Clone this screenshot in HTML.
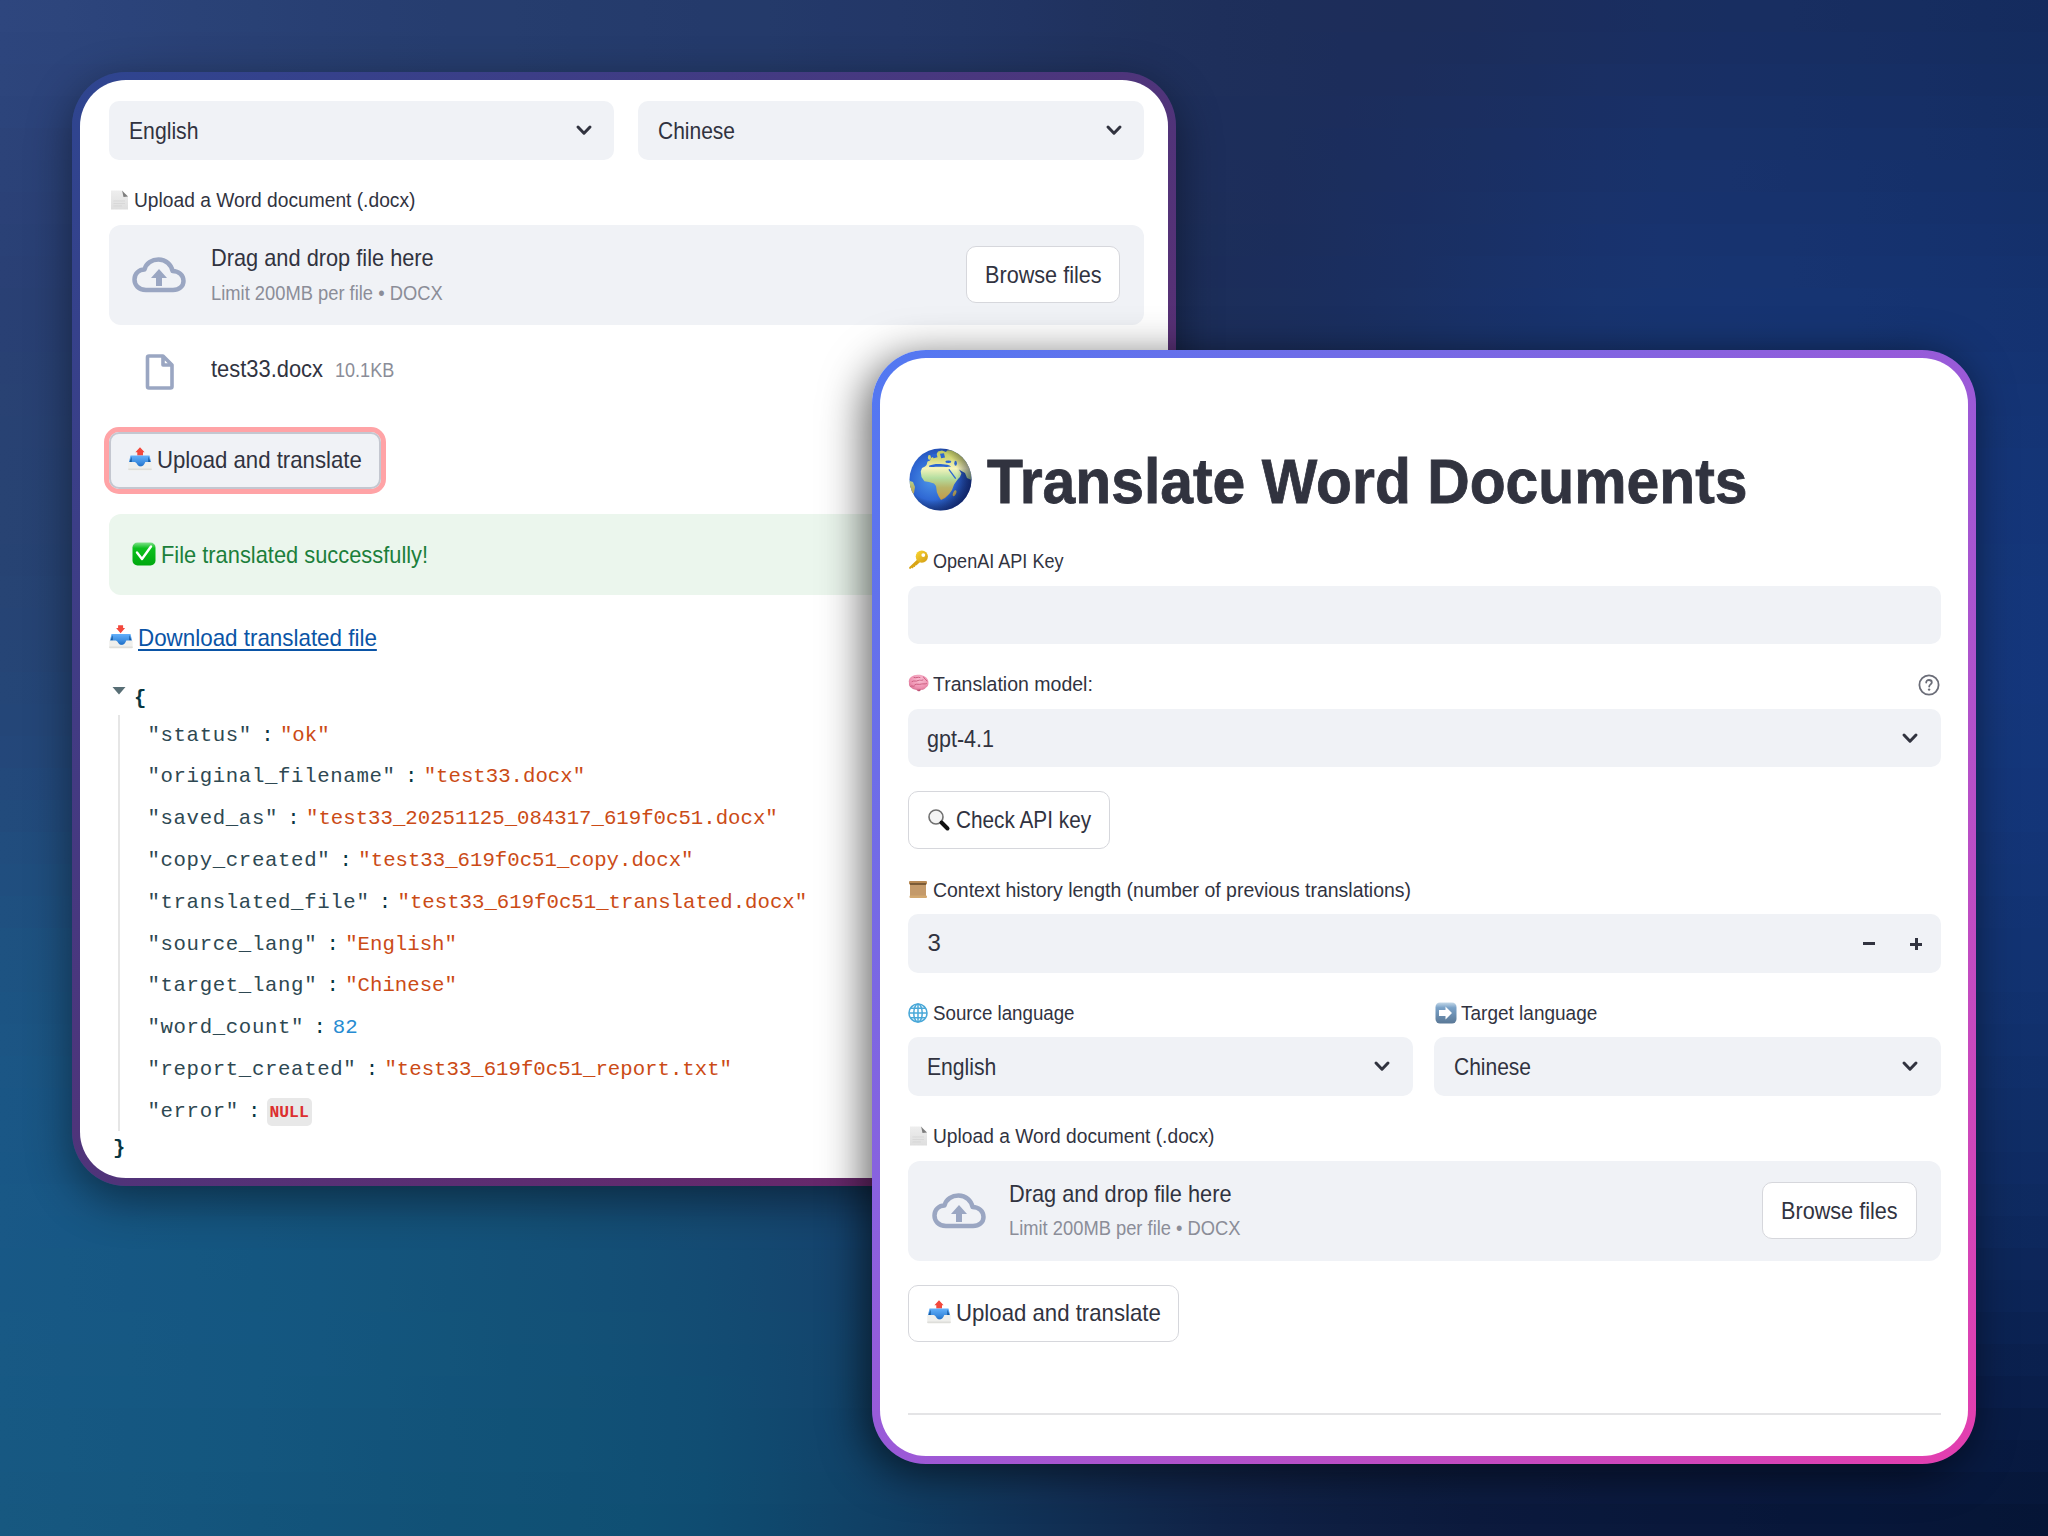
<!DOCTYPE html><html><head><meta charset="utf-8"><style>
html,body{margin:0;padding:0;}
body{width:2048px;height:1536px;overflow:hidden;position:relative;font-family:"Liberation Sans",sans-serif;background:#1a3060;}
.b{position:absolute;}
.t{position:absolute;white-space:nowrap;transform-origin:0 0;display:block;}
</style></head><body>

<div style="position:absolute;left:0;top:0px;width:2048px;height:33px;background:linear-gradient(90deg,rgb(46,70,126) 0.0%,rgb(45,69,124) 3.1%,rgb(43,67,122) 6.2%,rgb(42,66,119) 9.4%,rgb(41,65,117) 12.5%,rgb(40,63,115) 15.6%,rgb(39,62,113) 18.8%,rgb(38,61,111) 21.9%,rgb(38,61,110) 25.0%,rgb(37,60,109) 28.1%,rgb(37,59,108) 31.2%,rgb(36,58,107) 34.4%,rgb(36,58,106) 37.5%,rgb(35,56,105) 40.6%,rgb(35,55,103) 43.8%,rgb(34,54,101) 46.9%,rgb(33,52,99) 50.0%,rgb(32,50,95) 53.1%,rgb(31,49,92) 56.2%,rgb(30,47,91) 59.4%,rgb(29,46,90) 62.5%,rgb(29,45,90) 65.6%,rgb(28,45,90) 68.8%,rgb(28,45,91) 71.9%,rgb(27,45,93) 75.0%,rgb(26,45,95) 78.1%,rgb(25,46,96) 81.2%,rgb(24,46,97) 84.4%,rgb(24,46,97) 87.5%,rgb(23,45,96) 90.6%,rgb(22,45,96) 93.8%,rgb(21,44,95) 96.9%,rgb(20,43,94) 100.0%)"></div>
<div style="position:absolute;left:0;top:32px;width:2048px;height:33px;background:linear-gradient(90deg,rgb(45,69,125) 0.0%,rgb(44,68,123) 3.1%,rgb(43,67,121) 6.2%,rgb(42,65,118) 9.4%,rgb(41,64,116) 12.5%,rgb(40,63,114) 15.6%,rgb(39,62,112) 18.8%,rgb(38,61,111) 21.9%,rgb(38,61,110) 25.0%,rgb(37,60,109) 28.1%,rgb(37,59,108) 31.2%,rgb(36,58,107) 34.4%,rgb(36,58,106) 37.5%,rgb(35,56,104) 40.6%,rgb(35,55,103) 43.8%,rgb(34,54,101) 46.9%,rgb(33,52,98) 50.0%,rgb(32,50,94) 53.1%,rgb(31,48,92) 56.2%,rgb(30,47,91) 59.4%,rgb(29,46,90) 62.5%,rgb(28,45,91) 65.6%,rgb(28,45,91) 68.8%,rgb(27,45,92) 71.9%,rgb(27,46,94) 75.0%,rgb(26,46,96) 78.1%,rgb(25,46,98) 81.2%,rgb(24,46,99) 84.4%,rgb(23,46,99) 87.5%,rgb(23,46,98) 90.6%,rgb(22,45,98) 93.8%,rgb(21,45,96) 96.9%,rgb(20,44,96) 100.0%)"></div>
<div style="position:absolute;left:0;top:64px;width:2048px;height:33px;background:linear-gradient(90deg,rgb(45,69,124) 0.0%,rgb(44,67,122) 3.1%,rgb(43,66,120) 6.2%,rgb(42,65,117) 9.4%,rgb(41,64,115) 12.5%,rgb(40,63,114) 15.6%,rgb(39,62,112) 18.8%,rgb(38,61,111) 21.9%,rgb(38,61,109) 25.0%,rgb(37,60,108) 28.1%,rgb(37,59,108) 31.2%,rgb(36,59,107) 34.4%,rgb(36,58,105) 37.5%,rgb(35,56,104) 40.6%,rgb(34,55,102) 43.8%,rgb(34,54,100) 46.9%,rgb(33,52,97) 50.0%,rgb(32,50,94) 53.1%,rgb(31,48,92) 56.2%,rgb(30,47,91) 59.4%,rgb(29,46,91) 62.5%,rgb(28,45,91) 65.6%,rgb(28,45,92) 68.8%,rgb(27,46,94) 71.9%,rgb(26,46,96) 75.0%,rgb(26,47,99) 78.1%,rgb(25,47,100) 81.2%,rgb(24,47,101) 84.4%,rgb(23,47,101) 87.5%,rgb(22,47,100) 90.6%,rgb(22,46,100) 93.8%,rgb(21,45,98) 96.9%,rgb(20,45,97) 100.0%)"></div>
<div style="position:absolute;left:0;top:96px;width:2048px;height:33px;background:linear-gradient(90deg,rgb(44,68,123) 0.0%,rgb(43,66,121) 3.1%,rgb(42,65,118) 6.2%,rgb(41,64,117) 9.4%,rgb(41,63,115) 12.5%,rgb(40,63,113) 15.6%,rgb(39,62,112) 18.8%,rgb(38,61,110) 21.9%,rgb(38,61,109) 25.0%,rgb(37,60,108) 28.1%,rgb(37,59,107) 31.2%,rgb(36,59,106) 34.4%,rgb(36,58,105) 37.5%,rgb(35,56,104) 40.6%,rgb(34,55,102) 43.8%,rgb(33,53,100) 46.9%,rgb(32,51,97) 50.0%,rgb(31,49,94) 53.1%,rgb(30,48,92) 56.2%,rgb(29,46,91) 59.4%,rgb(28,46,91) 62.5%,rgb(28,45,92) 65.6%,rgb(27,46,94) 68.8%,rgb(27,46,96) 71.9%,rgb(26,47,98) 75.0%,rgb(25,47,101) 78.1%,rgb(25,48,103) 81.2%,rgb(24,48,103) 84.4%,rgb(23,48,103) 87.5%,rgb(22,47,103) 90.6%,rgb(22,47,102) 93.8%,rgb(21,46,100) 96.9%,rgb(20,45,99) 100.0%)"></div>
<div style="position:absolute;left:0;top:128px;width:2048px;height:33px;background:linear-gradient(90deg,rgb(44,67,121) 0.0%,rgb(43,65,119) 3.1%,rgb(42,64,117) 6.2%,rgb(41,64,116) 9.4%,rgb(40,63,114) 12.5%,rgb(40,62,113) 15.6%,rgb(39,62,111) 18.8%,rgb(38,61,110) 21.9%,rgb(38,61,109) 25.0%,rgb(37,60,108) 28.1%,rgb(37,60,108) 31.2%,rgb(36,59,106) 34.4%,rgb(36,58,105) 37.5%,rgb(35,56,103) 40.6%,rgb(34,55,101) 43.8%,rgb(33,53,99) 46.9%,rgb(32,51,96) 50.0%,rgb(31,49,93) 53.1%,rgb(30,47,91) 56.2%,rgb(29,46,91) 59.4%,rgb(28,46,91) 62.5%,rgb(27,45,93) 65.6%,rgb(27,46,95) 68.8%,rgb(26,47,97) 71.9%,rgb(26,47,100) 75.0%,rgb(25,48,103) 78.1%,rgb(24,49,105) 81.2%,rgb(24,49,105) 84.4%,rgb(23,49,105) 87.5%,rgb(22,48,105) 90.6%,rgb(22,48,104) 93.8%,rgb(21,47,103) 96.9%,rgb(20,46,101) 100.0%)"></div>
<div style="position:absolute;left:0;top:160px;width:2048px;height:33px;background:linear-gradient(90deg,rgb(43,66,120) 0.0%,rgb(42,65,118) 3.1%,rgb(41,64,116) 6.2%,rgb(41,63,115) 9.4%,rgb(40,63,113) 12.5%,rgb(39,62,112) 15.6%,rgb(39,62,111) 18.8%,rgb(38,62,110) 21.9%,rgb(38,61,109) 25.0%,rgb(37,61,109) 28.1%,rgb(37,60,108) 31.2%,rgb(36,59,106) 34.4%,rgb(36,58,105) 37.5%,rgb(35,56,103) 40.6%,rgb(34,55,101) 43.8%,rgb(33,53,99) 46.9%,rgb(32,51,96) 50.0%,rgb(31,49,93) 53.1%,rgb(30,47,91) 56.2%,rgb(29,46,91) 59.4%,rgb(28,45,91) 62.5%,rgb(27,46,93) 65.6%,rgb(27,46,96) 68.8%,rgb(26,47,99) 71.9%,rgb(25,48,102) 75.0%,rgb(25,49,105) 78.1%,rgb(24,50,107) 81.2%,rgb(24,50,108) 84.4%,rgb(23,49,107) 87.5%,rgb(22,49,107) 90.6%,rgb(21,48,106) 93.8%,rgb(21,48,105) 96.9%,rgb(20,47,103) 100.0%)"></div>
<div style="position:absolute;left:0;top:192px;width:2048px;height:33px;background:linear-gradient(90deg,rgb(43,65,119) 0.0%,rgb(42,64,117) 3.1%,rgb(41,63,115) 6.2%,rgb(40,63,114) 9.4%,rgb(40,62,113) 12.5%,rgb(39,62,112) 15.6%,rgb(39,62,111) 18.8%,rgb(38,62,110) 21.9%,rgb(38,61,110) 25.0%,rgb(37,61,109) 28.1%,rgb(37,60,108) 31.2%,rgb(36,59,106) 34.4%,rgb(36,58,105) 37.5%,rgb(35,56,103) 40.6%,rgb(34,55,101) 43.8%,rgb(33,53,98) 46.9%,rgb(32,51,95) 50.0%,rgb(31,49,93) 53.1%,rgb(30,47,91) 56.2%,rgb(29,46,90) 59.4%,rgb(28,45,91) 62.5%,rgb(27,46,94) 65.6%,rgb(26,46,97) 68.8%,rgb(26,48,100) 71.9%,rgb(25,49,104) 75.0%,rgb(25,50,107) 78.1%,rgb(24,50,109) 81.2%,rgb(23,50,109) 84.4%,rgb(23,50,109) 87.5%,rgb(22,50,109) 90.6%,rgb(21,49,108) 93.8%,rgb(21,48,107) 96.9%,rgb(20,48,105) 100.0%)"></div>
<div style="position:absolute;left:0;top:224px;width:2048px;height:33px;background:linear-gradient(90deg,rgb(42,65,118) 0.0%,rgb(41,63,116) 3.1%,rgb(41,63,114) 6.2%,rgb(40,62,113) 9.4%,rgb(40,62,112) 12.5%,rgb(39,62,112) 15.6%,rgb(39,62,111) 18.8%,rgb(38,62,110) 21.9%,rgb(38,62,110) 25.0%,rgb(37,61,109) 28.1%,rgb(37,60,108) 31.2%,rgb(36,59,107) 34.4%,rgb(36,58,105) 37.5%,rgb(35,56,103) 40.6%,rgb(34,55,101) 43.8%,rgb(33,53,98) 46.9%,rgb(32,50,95) 50.0%,rgb(31,48,93) 53.1%,rgb(29,47,91) 56.2%,rgb(28,46,90) 59.4%,rgb(27,45,91) 62.5%,rgb(27,46,94) 65.6%,rgb(26,47,98) 68.8%,rgb(25,48,101) 71.9%,rgb(25,49,105) 75.0%,rgb(24,50,109) 78.1%,rgb(24,51,111) 81.2%,rgb(23,51,111) 84.4%,rgb(23,51,111) 87.5%,rgb(22,50,111) 90.6%,rgb(21,50,110) 93.8%,rgb(21,49,109) 96.9%,rgb(20,48,107) 100.0%)"></div>
<div style="position:absolute;left:0;top:256px;width:2048px;height:33px;background:linear-gradient(90deg,rgb(42,64,117) 0.0%,rgb(41,63,115) 3.1%,rgb(40,62,114) 6.2%,rgb(40,62,113) 9.4%,rgb(39,62,112) 12.5%,rgb(39,62,111) 15.6%,rgb(39,62,111) 18.8%,rgb(38,62,110) 21.9%,rgb(38,62,110) 25.0%,rgb(37,62,109) 28.1%,rgb(37,61,108) 31.2%,rgb(36,60,107) 34.4%,rgb(36,58,105) 37.5%,rgb(35,56,103) 40.6%,rgb(34,55,100) 43.8%,rgb(33,53,98) 46.9%,rgb(32,50,95) 50.0%,rgb(30,48,93) 53.1%,rgb(29,47,91) 56.2%,rgb(28,45,90) 59.4%,rgb(27,45,92) 62.5%,rgb(26,46,95) 65.6%,rgb(26,47,98) 68.8%,rgb(25,49,103) 71.9%,rgb(25,50,107) 75.0%,rgb(24,51,110) 78.1%,rgb(24,52,112) 81.2%,rgb(23,52,113) 84.4%,rgb(23,52,113) 87.5%,rgb(22,51,112) 90.6%,rgb(21,51,112) 93.8%,rgb(21,50,111) 96.9%,rgb(20,49,109) 100.0%)"></div>
<div style="position:absolute;left:0;top:288px;width:2048px;height:33px;background:linear-gradient(90deg,rgb(41,64,116) 0.0%,rgb(41,63,114) 3.1%,rgb(40,62,113) 6.2%,rgb(40,62,112) 9.4%,rgb(39,62,112) 12.5%,rgb(39,62,111) 15.6%,rgb(38,63,111) 18.8%,rgb(38,63,110) 21.9%,rgb(38,62,110) 25.0%,rgb(38,62,109) 28.1%,rgb(37,61,108) 31.2%,rgb(36,60,107) 34.4%,rgb(36,58,105) 37.5%,rgb(35,57,103) 40.6%,rgb(34,55,100) 43.8%,rgb(33,53,98) 46.9%,rgb(31,50,95) 50.0%,rgb(30,48,93) 53.1%,rgb(29,47,91) 56.2%,rgb(28,46,90) 59.4%,rgb(27,46,92) 62.5%,rgb(26,46,95) 65.6%,rgb(26,48,99) 68.8%,rgb(25,49,104) 71.9%,rgb(24,50,108) 75.0%,rgb(24,52,111) 78.1%,rgb(23,52,113) 81.2%,rgb(23,52,114) 84.4%,rgb(22,52,114) 87.5%,rgb(22,52,114) 90.6%,rgb(21,51,113) 93.8%,rgb(21,51,112) 96.9%,rgb(20,50,111) 100.0%)"></div>
<div style="position:absolute;left:0;top:320px;width:2048px;height:33px;background:linear-gradient(90deg,rgb(41,64,116) 0.0%,rgb(40,63,114) 3.1%,rgb(40,63,113) 6.2%,rgb(39,62,112) 9.4%,rgb(39,63,111) 12.5%,rgb(39,63,111) 15.6%,rgb(38,63,111) 18.8%,rgb(38,63,111) 21.9%,rgb(38,63,110) 25.0%,rgb(38,62,110) 28.1%,rgb(37,62,109) 31.2%,rgb(36,60,107) 34.4%,rgb(36,59,105) 37.5%,rgb(35,57,103) 40.6%,rgb(34,55,101) 43.8%,rgb(32,53,98) 46.9%,rgb(31,51,95) 50.0%,rgb(30,49,93) 53.1%,rgb(29,47,91) 56.2%,rgb(28,46,91) 59.4%,rgb(27,46,93) 62.5%,rgb(26,47,96) 65.6%,rgb(25,48,100) 68.8%,rgb(25,50,105) 71.9%,rgb(24,51,109) 75.0%,rgb(24,52,112) 78.1%,rgb(23,53,114) 81.2%,rgb(23,53,115) 84.4%,rgb(22,53,116) 87.5%,rgb(22,53,116) 90.6%,rgb(21,52,115) 93.8%,rgb(21,51,114) 96.9%,rgb(20,50,113) 100.0%)"></div>
<div style="position:absolute;left:0;top:352px;width:2048px;height:33px;background:linear-gradient(90deg,rgb(41,65,115) 0.0%,rgb(40,64,114) 3.1%,rgb(40,63,112) 6.2%,rgb(39,63,112) 9.4%,rgb(39,63,111) 12.5%,rgb(38,63,111) 15.6%,rgb(38,63,111) 18.8%,rgb(38,63,111) 21.9%,rgb(38,63,111) 25.0%,rgb(37,63,110) 28.1%,rgb(37,62,109) 31.2%,rgb(36,61,107) 34.4%,rgb(35,59,106) 37.5%,rgb(34,57,103) 40.6%,rgb(33,55,101) 43.8%,rgb(32,53,98) 46.9%,rgb(31,51,96) 50.0%,rgb(30,49,94) 53.1%,rgb(29,47,92) 56.2%,rgb(28,46,92) 59.4%,rgb(27,46,94) 62.5%,rgb(26,47,97) 65.6%,rgb(25,49,101) 68.8%,rgb(25,50,106) 71.9%,rgb(24,52,110) 75.0%,rgb(24,53,113) 78.1%,rgb(23,53,115) 81.2%,rgb(23,54,117) 84.4%,rgb(22,54,117) 87.5%,rgb(22,53,117) 90.6%,rgb(21,53,117) 93.8%,rgb(21,52,116) 96.9%,rgb(20,51,114) 100.0%)"></div>
<div style="position:absolute;left:0;top:384px;width:2048px;height:33px;background:linear-gradient(90deg,rgb(41,66,115) 0.0%,rgb(40,64,114) 3.1%,rgb(39,63,112) 6.2%,rgb(39,63,112) 9.4%,rgb(38,63,111) 12.5%,rgb(38,63,111) 15.6%,rgb(38,63,111) 18.8%,rgb(38,64,111) 21.9%,rgb(38,64,111) 25.0%,rgb(37,63,110) 28.1%,rgb(37,62,109) 31.2%,rgb(36,61,108) 34.4%,rgb(35,59,106) 37.5%,rgb(34,57,104) 40.6%,rgb(33,55,101) 43.8%,rgb(32,53,99) 46.9%,rgb(31,51,97) 50.0%,rgb(30,49,94) 53.1%,rgb(29,48,93) 56.2%,rgb(28,47,93) 59.4%,rgb(27,47,95) 62.5%,rgb(26,48,98) 65.6%,rgb(25,50,102) 68.8%,rgb(24,51,106) 71.9%,rgb(24,52,110) 75.0%,rgb(23,53,114) 78.1%,rgb(23,54,116) 81.2%,rgb(23,54,118) 84.4%,rgb(22,54,118) 87.5%,rgb(22,54,118) 90.6%,rgb(21,53,118) 93.8%,rgb(21,52,117) 96.9%,rgb(20,52,116) 100.0%)"></div>
<div style="position:absolute;left:0;top:416px;width:2048px;height:33px;background:linear-gradient(90deg,rgb(40,66,115) 0.0%,rgb(40,65,114) 3.1%,rgb(39,64,112) 6.2%,rgb(39,64,112) 9.4%,rgb(38,64,111) 12.5%,rgb(38,64,111) 15.6%,rgb(38,64,111) 18.8%,rgb(37,64,111) 21.9%,rgb(37,64,111) 25.0%,rgb(37,64,111) 28.1%,rgb(37,63,110) 31.2%,rgb(36,61,108) 34.4%,rgb(35,60,106) 37.5%,rgb(34,58,104) 40.6%,rgb(33,56,102) 43.8%,rgb(32,54,100) 46.9%,rgb(31,52,97) 50.0%,rgb(30,50,95) 53.1%,rgb(29,49,94) 56.2%,rgb(28,48,95) 59.4%,rgb(27,48,96) 62.5%,rgb(26,49,100) 65.6%,rgb(25,50,103) 68.8%,rgb(24,52,107) 71.9%,rgb(24,53,111) 75.0%,rgb(23,54,115) 78.1%,rgb(23,54,117) 81.2%,rgb(23,55,119) 84.4%,rgb(22,55,119) 87.5%,rgb(22,54,120) 90.6%,rgb(21,54,119) 93.8%,rgb(21,53,118) 96.9%,rgb(20,52,117) 100.0%)"></div>
<div style="position:absolute;left:0;top:448px;width:2048px;height:33px;background:linear-gradient(90deg,rgb(40,66,115) 0.0%,rgb(39,65,114) 3.1%,rgb(39,64,112) 6.2%,rgb(38,64,112) 9.4%,rgb(38,64,112) 12.5%,rgb(38,64,111) 15.6%,rgb(37,64,111) 18.8%,rgb(37,64,111) 21.9%,rgb(37,64,111) 25.0%,rgb(37,64,111) 28.1%,rgb(36,63,110) 31.2%,rgb(36,62,108) 34.4%,rgb(35,60,107) 37.5%,rgb(34,58,105) 40.6%,rgb(33,56,102) 43.8%,rgb(32,54,100) 46.9%,rgb(31,52,98) 50.0%,rgb(30,51,97) 53.1%,rgb(29,49,96) 56.2%,rgb(27,49,96) 59.4%,rgb(26,49,98) 62.5%,rgb(26,50,101) 65.6%,rgb(25,51,105) 68.8%,rgb(24,52,108) 71.9%,rgb(24,54,112) 75.0%,rgb(23,54,115) 78.1%,rgb(23,55,118) 81.2%,rgb(22,55,119) 84.4%,rgb(22,55,120) 87.5%,rgb(22,55,121) 90.6%,rgb(21,54,120) 93.8%,rgb(21,53,120) 96.9%,rgb(20,53,118) 100.0%)"></div>
<div style="position:absolute;left:0;top:480px;width:2048px;height:33px;background:linear-gradient(90deg,rgb(40,67,115) 0.0%,rgb(39,66,114) 3.1%,rgb(39,65,113) 6.2%,rgb(38,65,112) 9.4%,rgb(38,64,112) 12.5%,rgb(37,65,112) 15.6%,rgb(37,65,112) 18.8%,rgb(37,65,112) 21.9%,rgb(37,65,111) 25.0%,rgb(36,64,111) 28.1%,rgb(36,63,110) 31.2%,rgb(35,62,109) 34.4%,rgb(35,60,107) 37.5%,rgb(34,58,105) 40.6%,rgb(33,56,103) 43.8%,rgb(32,54,101) 46.9%,rgb(31,53,99) 50.0%,rgb(30,51,98) 53.1%,rgb(29,50,97) 56.2%,rgb(27,50,98) 59.4%,rgb(26,50,99) 62.5%,rgb(25,51,102) 65.6%,rgb(25,52,106) 68.8%,rgb(24,53,109) 71.9%,rgb(23,54,113) 75.0%,rgb(23,55,116) 78.1%,rgb(23,56,118) 81.2%,rgb(22,56,120) 84.4%,rgb(22,56,121) 87.5%,rgb(22,55,122) 90.6%,rgb(21,55,121) 93.8%,rgb(21,54,121) 96.9%,rgb(20,53,120) 100.0%)"></div>
<div style="position:absolute;left:0;top:512px;width:2048px;height:33px;background:linear-gradient(90deg,rgb(40,67,115) 0.0%,rgb(39,66,114) 3.1%,rgb(38,65,113) 6.2%,rgb(38,65,112) 9.4%,rgb(37,65,112) 12.5%,rgb(37,65,112) 15.6%,rgb(37,65,112) 18.8%,rgb(36,65,112) 21.9%,rgb(36,65,112) 25.0%,rgb(36,64,111) 28.1%,rgb(36,64,110) 31.2%,rgb(35,62,109) 34.4%,rgb(34,61,107) 37.5%,rgb(34,59,106) 40.6%,rgb(33,57,104) 43.8%,rgb(32,55,102) 46.9%,rgb(31,53,100) 50.0%,rgb(30,52,99) 53.1%,rgb(28,51,99) 56.2%,rgb(27,51,99) 59.4%,rgb(26,51,101) 62.5%,rgb(25,52,104) 65.6%,rgb(25,53,107) 68.8%,rgb(24,54,110) 71.9%,rgb(23,55,114) 75.0%,rgb(23,56,117) 78.1%,rgb(22,56,119) 81.2%,rgb(22,56,121) 84.4%,rgb(22,56,122) 87.5%,rgb(22,56,122) 90.6%,rgb(21,55,122) 93.8%,rgb(21,54,122) 96.9%,rgb(20,53,120) 100.0%)"></div>
<div style="position:absolute;left:0;top:544px;width:2048px;height:33px;background:linear-gradient(90deg,rgb(39,67,115) 0.0%,rgb(38,66,114) 3.1%,rgb(38,66,113) 6.2%,rgb(37,66,113) 9.4%,rgb(37,66,113) 12.5%,rgb(36,66,112) 15.6%,rgb(36,66,112) 18.8%,rgb(36,66,112) 21.9%,rgb(36,65,112) 25.0%,rgb(35,65,111) 28.1%,rgb(35,64,110) 31.2%,rgb(35,63,109) 34.4%,rgb(34,61,108) 37.5%,rgb(33,59,106) 40.6%,rgb(32,57,104) 43.8%,rgb(32,55,103) 46.9%,rgb(31,54,101) 50.0%,rgb(29,53,100) 53.1%,rgb(28,52,100) 56.2%,rgb(27,51,101) 59.4%,rgb(26,52,102) 62.5%,rgb(25,52,105) 65.6%,rgb(24,53,108) 68.8%,rgb(24,55,111) 71.9%,rgb(23,55,115) 75.0%,rgb(23,56,117) 78.1%,rgb(22,56,120) 81.2%,rgb(22,57,121) 84.4%,rgb(22,56,122) 87.5%,rgb(22,56,123) 90.6%,rgb(21,55,123) 93.8%,rgb(21,55,122) 96.9%,rgb(20,54,121) 100.0%)"></div>
<div style="position:absolute;left:0;top:576px;width:2048px;height:33px;background:linear-gradient(90deg,rgb(39,68,116) 0.0%,rgb(38,67,115) 3.1%,rgb(37,66,114) 6.2%,rgb(37,66,113) 9.4%,rgb(36,66,113) 12.5%,rgb(36,66,113) 15.6%,rgb(36,66,113) 18.8%,rgb(35,66,113) 21.9%,rgb(35,66,112) 25.0%,rgb(35,65,112) 28.1%,rgb(35,64,111) 31.2%,rgb(34,63,110) 34.4%,rgb(34,61,108) 37.5%,rgb(33,60,107) 40.6%,rgb(32,58,105) 43.8%,rgb(31,56,104) 46.9%,rgb(30,54,102) 50.0%,rgb(29,53,102) 53.1%,rgb(28,52,101) 56.2%,rgb(27,52,102) 59.4%,rgb(26,52,104) 62.5%,rgb(25,53,106) 65.6%,rgb(24,54,109) 68.8%,rgb(24,55,112) 71.9%,rgb(23,56,115) 75.0%,rgb(23,57,118) 78.1%,rgb(22,57,120) 81.2%,rgb(22,57,122) 84.4%,rgb(22,57,123) 87.5%,rgb(22,56,123) 90.6%,rgb(21,56,124) 93.8%,rgb(21,55,123) 96.9%,rgb(20,54,122) 100.0%)"></div>
<div style="position:absolute;left:0;top:608px;width:2048px;height:33px;background:linear-gradient(90deg,rgb(38,68,117) 0.0%,rgb(38,67,115) 3.1%,rgb(37,67,115) 6.2%,rgb(36,67,114) 9.4%,rgb(36,67,114) 12.5%,rgb(35,67,114) 15.6%,rgb(35,67,113) 18.8%,rgb(35,67,113) 21.9%,rgb(35,66,113) 25.0%,rgb(34,66,112) 28.1%,rgb(34,65,111) 31.2%,rgb(34,63,110) 34.4%,rgb(33,62,109) 37.5%,rgb(33,60,107) 40.6%,rgb(32,58,106) 43.8%,rgb(31,56,105) 46.9%,rgb(30,55,103) 50.0%,rgb(29,54,103) 53.1%,rgb(28,53,103) 56.2%,rgb(27,53,103) 59.4%,rgb(26,53,105) 62.5%,rgb(25,54,107) 65.6%,rgb(24,55,110) 68.8%,rgb(23,56,113) 71.9%,rgb(23,57,116) 75.0%,rgb(22,57,118) 78.1%,rgb(22,57,120) 81.2%,rgb(22,57,122) 84.4%,rgb(22,57,123) 87.5%,rgb(21,56,124) 90.6%,rgb(21,56,124) 93.8%,rgb(21,55,123) 96.9%,rgb(20,54,122) 100.0%)"></div>
<div style="position:absolute;left:0;top:640px;width:2048px;height:33px;background:linear-gradient(90deg,rgb(38,69,118) 0.0%,rgb(37,68,116) 3.1%,rgb(36,68,116) 6.2%,rgb(36,68,115) 9.4%,rgb(35,68,114) 12.5%,rgb(35,68,114) 15.6%,rgb(34,68,114) 18.8%,rgb(34,67,113) 21.9%,rgb(34,67,113) 25.0%,rgb(34,66,112) 28.1%,rgb(33,65,111) 31.2%,rgb(33,64,110) 34.4%,rgb(33,62,109) 37.5%,rgb(32,60,108) 40.6%,rgb(32,59,107) 43.8%,rgb(31,57,105) 46.9%,rgb(30,56,104) 50.0%,rgb(29,54,104) 53.1%,rgb(28,54,104) 56.2%,rgb(27,53,104) 59.4%,rgb(26,54,106) 62.5%,rgb(25,54,108) 65.6%,rgb(24,55,111) 68.8%,rgb(23,56,113) 71.9%,rgb(23,57,116) 75.0%,rgb(22,57,118) 78.1%,rgb(22,57,120) 81.2%,rgb(22,57,122) 84.4%,rgb(22,57,123) 87.5%,rgb(21,56,124) 90.6%,rgb(21,56,124) 93.8%,rgb(21,55,124) 96.9%,rgb(20,54,123) 100.0%)"></div>
<div style="position:absolute;left:0;top:672px;width:2048px;height:33px;background:linear-gradient(90deg,rgb(37,70,119) 0.0%,rgb(36,69,118) 3.1%,rgb(36,69,117) 6.2%,rgb(35,68,116) 9.4%,rgb(34,68,115) 12.5%,rgb(34,68,115) 15.6%,rgb(34,68,114) 18.8%,rgb(33,68,114) 21.9%,rgb(33,67,113) 25.0%,rgb(33,67,113) 28.1%,rgb(33,66,112) 31.2%,rgb(33,64,111) 34.4%,rgb(32,63,110) 37.5%,rgb(32,61,108) 40.6%,rgb(31,59,107) 43.8%,rgb(31,57,106) 46.9%,rgb(30,56,105) 50.0%,rgb(29,55,105) 53.1%,rgb(28,54,105) 56.2%,rgb(27,54,105) 59.4%,rgb(26,54,107) 62.5%,rgb(25,55,109) 65.6%,rgb(24,56,111) 68.8%,rgb(23,57,114) 71.9%,rgb(22,57,116) 75.0%,rgb(22,57,118) 78.1%,rgb(22,57,120) 81.2%,rgb(22,57,122) 84.4%,rgb(21,57,123) 87.5%,rgb(21,56,124) 90.6%,rgb(21,56,124) 93.8%,rgb(21,55,124) 96.9%,rgb(20,54,123) 100.0%)"></div>
<div style="position:absolute;left:0;top:704px;width:2048px;height:33px;background:linear-gradient(90deg,rgb(36,70,120) 0.0%,rgb(36,70,119) 3.1%,rgb(35,69,118) 6.2%,rgb(34,69,117) 9.4%,rgb(34,69,116) 12.5%,rgb(33,69,115) 15.6%,rgb(33,69,115) 18.8%,rgb(33,69,114) 21.9%,rgb(32,68,114) 25.0%,rgb(32,67,113) 28.1%,rgb(32,66,112) 31.2%,rgb(32,65,111) 34.4%,rgb(32,63,110) 37.5%,rgb(31,61,109) 40.6%,rgb(31,60,108) 43.8%,rgb(30,58,107) 46.9%,rgb(30,56,106) 50.0%,rgb(29,55,105) 53.1%,rgb(28,55,105) 56.2%,rgb(26,54,106) 59.4%,rgb(25,55,107) 62.5%,rgb(24,55,109) 65.6%,rgb(24,56,111) 68.8%,rgb(23,57,114) 71.9%,rgb(22,57,116) 75.0%,rgb(22,57,118) 78.1%,rgb(22,57,120) 81.2%,rgb(21,57,121) 84.4%,rgb(21,57,123) 87.5%,rgb(21,56,123) 90.6%,rgb(21,56,124) 93.8%,rgb(21,55,123) 96.9%,rgb(20,54,122) 100.0%)"></div>
<div style="position:absolute;left:0;top:736px;width:2048px;height:33px;background:linear-gradient(90deg,rgb(36,71,122) 0.0%,rgb(35,71,120) 3.1%,rgb(34,71,119) 6.2%,rgb(33,71,118) 9.4%,rgb(33,70,117) 12.5%,rgb(32,70,116) 15.6%,rgb(32,70,115) 18.8%,rgb(32,69,115) 21.9%,rgb(32,69,114) 25.0%,rgb(32,68,113) 28.1%,rgb(31,67,113) 31.2%,rgb(31,65,112) 34.4%,rgb(31,64,111) 37.5%,rgb(31,62,109) 40.6%,rgb(30,60,108) 43.8%,rgb(30,58,108) 46.9%,rgb(29,57,107) 50.0%,rgb(28,56,106) 53.1%,rgb(27,55,106) 56.2%,rgb(26,55,106) 59.4%,rgb(25,55,108) 62.5%,rgb(24,55,109) 65.6%,rgb(23,56,111) 68.8%,rgb(23,57,114) 71.9%,rgb(22,57,116) 75.0%,rgb(22,57,118) 78.1%,rgb(21,57,119) 81.2%,rgb(21,57,121) 84.4%,rgb(21,57,122) 87.5%,rgb(21,56,123) 90.6%,rgb(21,56,123) 93.8%,rgb(20,55,123) 96.9%,rgb(20,54,122) 100.0%)"></div>
<div style="position:absolute;left:0;top:768px;width:2048px;height:33px;background:linear-gradient(90deg,rgb(35,73,123) 0.0%,rgb(34,72,122) 3.1%,rgb(33,72,120) 6.2%,rgb(33,72,119) 9.4%,rgb(32,71,118) 12.5%,rgb(32,71,117) 15.6%,rgb(31,71,116) 18.8%,rgb(31,70,115) 21.9%,rgb(31,69,115) 25.0%,rgb(31,68,114) 28.1%,rgb(31,67,113) 31.2%,rgb(31,66,112) 34.4%,rgb(30,64,111) 37.5%,rgb(30,62,110) 40.6%,rgb(30,61,109) 43.8%,rgb(29,59,108) 46.9%,rgb(29,57,107) 50.0%,rgb(28,56,107) 53.1%,rgb(27,55,106) 56.2%,rgb(26,55,107) 59.4%,rgb(25,55,108) 62.5%,rgb(24,55,109) 65.6%,rgb(23,56,111) 68.8%,rgb(23,56,113) 71.9%,rgb(22,57,115) 75.0%,rgb(22,57,117) 78.1%,rgb(21,57,119) 81.2%,rgb(21,56,120) 84.4%,rgb(21,56,121) 87.5%,rgb(21,56,122) 90.6%,rgb(20,55,122) 93.8%,rgb(20,54,122) 96.9%,rgb(20,53,121) 100.0%)"></div>
<div style="position:absolute;left:0;top:800px;width:2048px;height:33px;background:linear-gradient(90deg,rgb(34,75,124) 0.0%,rgb(33,74,123) 3.1%,rgb(32,73,121) 6.2%,rgb(32,73,120) 9.4%,rgb(31,73,119) 12.5%,rgb(31,72,118) 15.6%,rgb(30,72,117) 18.8%,rgb(30,71,116) 21.9%,rgb(30,70,115) 25.0%,rgb(30,69,114) 28.1%,rgb(30,68,113) 31.2%,rgb(30,66,112) 34.4%,rgb(30,65,111) 37.5%,rgb(30,63,110) 40.6%,rgb(29,61,109) 43.8%,rgb(29,59,108) 46.9%,rgb(28,58,107) 50.0%,rgb(28,56,107) 53.1%,rgb(27,55,107) 56.2%,rgb(26,55,107) 59.4%,rgb(25,55,108) 62.5%,rgb(24,55,109) 65.6%,rgb(23,55,111) 68.8%,rgb(22,56,113) 71.9%,rgb(22,56,115) 75.0%,rgb(21,56,116) 78.1%,rgb(21,56,118) 81.2%,rgb(21,56,119) 84.4%,rgb(21,56,120) 87.5%,rgb(20,55,121) 90.6%,rgb(20,55,121) 93.8%,rgb(20,54,121) 96.9%,rgb(19,53,120) 100.0%)"></div>
<div style="position:absolute;left:0;top:832px;width:2048px;height:33px;background:linear-gradient(90deg,rgb(33,77,126) 0.0%,rgb(32,76,124) 3.1%,rgb(31,75,122) 6.2%,rgb(31,74,121) 9.4%,rgb(30,74,120) 12.5%,rgb(30,73,118) 15.6%,rgb(29,73,117) 18.8%,rgb(29,72,116) 21.9%,rgb(29,71,116) 25.0%,rgb(29,70,115) 28.1%,rgb(29,69,114) 31.2%,rgb(29,67,113) 34.4%,rgb(29,65,112) 37.5%,rgb(29,63,111) 40.6%,rgb(29,61,109) 43.8%,rgb(28,60,108) 46.9%,rgb(28,58,108) 50.0%,rgb(27,57,107) 53.1%,rgb(26,56,107) 56.2%,rgb(25,55,107) 59.4%,rgb(25,55,107) 62.5%,rgb(24,55,109) 65.6%,rgb(23,55,110) 68.8%,rgb(22,55,112) 71.9%,rgb(22,55,114) 75.0%,rgb(21,56,115) 78.1%,rgb(21,56,117) 81.2%,rgb(21,55,118) 84.4%,rgb(20,55,119) 87.5%,rgb(20,55,120) 90.6%,rgb(20,54,120) 93.8%,rgb(20,53,119) 96.9%,rgb(19,52,118) 100.0%)"></div>
<div style="position:absolute;left:0;top:864px;width:2048px;height:33px;background:linear-gradient(90deg,rgb(32,78,127) 0.0%,rgb(31,78,125) 3.1%,rgb(30,77,123) 6.2%,rgb(30,76,122) 9.4%,rgb(29,75,120) 12.5%,rgb(29,74,119) 15.6%,rgb(29,74,118) 18.8%,rgb(28,73,117) 21.9%,rgb(28,72,116) 25.0%,rgb(28,71,115) 28.1%,rgb(28,69,114) 31.2%,rgb(29,68,113) 34.4%,rgb(29,66,112) 37.5%,rgb(28,64,111) 40.6%,rgb(28,62,110) 43.8%,rgb(28,60,109) 46.9%,rgb(27,58,108) 50.0%,rgb(27,57,107) 53.1%,rgb(26,56,106) 56.2%,rgb(25,55,106) 59.4%,rgb(24,54,107) 62.5%,rgb(23,54,108) 65.6%,rgb(23,54,109) 68.8%,rgb(22,55,111) 71.9%,rgb(21,55,112) 75.0%,rgb(21,55,114) 78.1%,rgb(21,55,115) 81.2%,rgb(20,55,117) 84.4%,rgb(20,54,118) 87.5%,rgb(20,54,118) 90.6%,rgb(20,54,118) 93.8%,rgb(19,53,118) 96.9%,rgb(19,52,117) 100.0%)"></div>
<div style="position:absolute;left:0;top:896px;width:2048px;height:33px;background:linear-gradient(90deg,rgb(31,80,128) 0.0%,rgb(30,79,126) 3.1%,rgb(29,78,125) 6.2%,rgb(29,77,123) 9.4%,rgb(28,76,121) 12.5%,rgb(28,75,120) 15.6%,rgb(28,74,119) 18.8%,rgb(28,74,117) 21.9%,rgb(28,73,116) 25.0%,rgb(28,71,115) 28.1%,rgb(28,70,114) 31.2%,rgb(28,68,113) 34.4%,rgb(28,66,112) 37.5%,rgb(28,64,111) 40.6%,rgb(28,62,110) 43.8%,rgb(27,60,109) 46.9%,rgb(27,58,107) 50.0%,rgb(26,57,107) 53.1%,rgb(26,55,106) 56.2%,rgb(25,55,106) 59.4%,rgb(24,54,106) 62.5%,rgb(23,54,107) 65.6%,rgb(22,54,108) 68.8%,rgb(22,54,110) 71.9%,rgb(21,54,111) 75.0%,rgb(21,54,113) 78.1%,rgb(20,54,114) 81.2%,rgb(20,54,115) 84.4%,rgb(20,54,116) 87.5%,rgb(20,53,117) 90.6%,rgb(19,53,117) 93.8%,rgb(19,52,116) 96.9%,rgb(18,51,115) 100.0%)"></div>
<div style="position:absolute;left:0;top:928px;width:2048px;height:33px;background:linear-gradient(90deg,rgb(30,82,129) 0.0%,rgb(29,81,127) 3.1%,rgb(28,80,126) 6.2%,rgb(28,78,124) 9.4%,rgb(27,77,122) 12.5%,rgb(27,76,120) 15.6%,rgb(27,75,119) 18.8%,rgb(27,75,118) 21.9%,rgb(27,73,117) 25.0%,rgb(27,72,116) 28.1%,rgb(27,71,115) 31.2%,rgb(27,69,114) 34.4%,rgb(27,67,112) 37.5%,rgb(27,65,111) 40.6%,rgb(27,63,110) 43.8%,rgb(27,60,108) 46.9%,rgb(26,58,107) 50.0%,rgb(26,57,106) 53.1%,rgb(25,55,105) 56.2%,rgb(24,54,105) 59.4%,rgb(24,53,105) 62.5%,rgb(23,53,106) 65.6%,rgb(22,53,107) 68.8%,rgb(21,53,108) 71.9%,rgb(21,53,110) 75.0%,rgb(20,53,111) 78.1%,rgb(20,53,112) 81.2%,rgb(20,53,113) 84.4%,rgb(19,53,114) 87.5%,rgb(19,53,115) 90.6%,rgb(19,52,115) 93.8%,rgb(18,51,115) 96.9%,rgb(18,51,114) 100.0%)"></div>
<div style="position:absolute;left:0;top:960px;width:2048px;height:33px;background:linear-gradient(90deg,rgb(29,83,130) 0.0%,rgb(28,82,128) 3.1%,rgb(28,81,126) 6.2%,rgb(27,80,125) 9.4%,rgb(26,78,123) 12.5%,rgb(26,77,121) 15.6%,rgb(26,76,120) 18.8%,rgb(26,75,118) 21.9%,rgb(26,74,117) 25.0%,rgb(26,73,116) 28.1%,rgb(26,71,115) 31.2%,rgb(26,70,114) 34.4%,rgb(26,67,112) 37.5%,rgb(26,65,111) 40.6%,rgb(26,63,110) 43.8%,rgb(26,61,108) 46.9%,rgb(26,58,107) 50.0%,rgb(25,57,106) 53.1%,rgb(25,55,105) 56.2%,rgb(24,54,104) 59.4%,rgb(23,53,104) 62.5%,rgb(23,52,105) 65.6%,rgb(22,52,105) 68.8%,rgb(21,52,107) 71.9%,rgb(21,52,108) 75.0%,rgb(20,52,109) 78.1%,rgb(20,52,110) 81.2%,rgb(19,52,112) 84.4%,rgb(19,52,113) 87.5%,rgb(19,52,113) 90.6%,rgb(18,51,113) 93.8%,rgb(18,51,113) 96.9%,rgb(18,50,112) 100.0%)"></div>
<div style="position:absolute;left:0;top:992px;width:2048px;height:33px;background:linear-gradient(90deg,rgb(28,84,131) 0.0%,rgb(27,83,129) 3.1%,rgb(27,82,127) 6.2%,rgb(26,81,125) 9.4%,rgb(25,79,123) 12.5%,rgb(25,78,122) 15.6%,rgb(25,77,120) 18.8%,rgb(25,76,119) 21.9%,rgb(25,75,118) 25.0%,rgb(25,74,117) 28.1%,rgb(25,72,115) 31.2%,rgb(26,70,114) 34.4%,rgb(26,68,113) 37.5%,rgb(26,66,111) 40.6%,rgb(26,63,109) 43.8%,rgb(26,61,108) 46.9%,rgb(25,58,106) 50.0%,rgb(25,56,105) 53.1%,rgb(24,55,104) 56.2%,rgb(24,53,103) 59.4%,rgb(23,52,103) 62.5%,rgb(22,51,103) 65.6%,rgb(21,51,104) 68.8%,rgb(21,51,105) 71.9%,rgb(20,51,106) 75.0%,rgb(20,51,107) 78.1%,rgb(19,51,108) 81.2%,rgb(19,51,110) 84.4%,rgb(19,51,111) 87.5%,rgb(18,51,111) 90.6%,rgb(18,50,111) 93.8%,rgb(18,50,111) 96.9%,rgb(17,49,110) 100.0%)"></div>
<div style="position:absolute;left:0;top:1024px;width:2048px;height:33px;background:linear-gradient(90deg,rgb(28,85,132) 0.0%,rgb(27,84,130) 3.1%,rgb(26,83,128) 6.2%,rgb(25,81,126) 9.4%,rgb(25,80,124) 12.5%,rgb(24,79,122) 15.6%,rgb(24,78,120) 18.8%,rgb(24,77,119) 21.9%,rgb(24,76,118) 25.0%,rgb(24,75,117) 28.1%,rgb(25,73,116) 31.2%,rgb(25,71,114) 34.4%,rgb(25,69,113) 37.5%,rgb(25,66,111) 40.6%,rgb(25,64,109) 43.8%,rgb(25,61,107) 46.9%,rgb(25,58,106) 50.0%,rgb(24,56,104) 53.1%,rgb(24,54,103) 56.2%,rgb(23,53,102) 59.4%,rgb(23,51,102) 62.5%,rgb(22,50,102) 65.6%,rgb(21,50,102) 68.8%,rgb(20,50,103) 71.9%,rgb(20,49,104) 75.0%,rgb(19,49,105) 78.1%,rgb(19,49,106) 81.2%,rgb(19,50,107) 84.4%,rgb(18,50,108) 87.5%,rgb(18,49,109) 90.6%,rgb(18,49,109) 93.8%,rgb(17,49,109) 96.9%,rgb(17,48,108) 100.0%)"></div>
<div style="position:absolute;left:0;top:1056px;width:2048px;height:33px;background:linear-gradient(90deg,rgb(27,86,133) 0.0%,rgb(26,85,131) 3.1%,rgb(25,84,129) 6.2%,rgb(24,82,127) 9.4%,rgb(24,81,124) 12.5%,rgb(23,80,122) 15.6%,rgb(23,79,121) 18.8%,rgb(23,78,120) 21.9%,rgb(23,77,118) 25.0%,rgb(24,75,117) 28.1%,rgb(24,74,116) 31.2%,rgb(24,72,114) 34.4%,rgb(24,69,113) 37.5%,rgb(24,67,111) 40.6%,rgb(25,64,109) 43.8%,rgb(24,61,107) 46.9%,rgb(24,58,105) 50.0%,rgb(24,56,103) 53.1%,rgb(23,54,102) 56.2%,rgb(23,52,101) 59.4%,rgb(22,50,100) 62.5%,rgb(21,49,100) 65.6%,rgb(21,49,100) 68.8%,rgb(20,48,101) 71.9%,rgb(19,48,102) 75.0%,rgb(19,48,103) 78.1%,rgb(19,48,104) 81.2%,rgb(18,48,105) 84.4%,rgb(18,48,106) 87.5%,rgb(18,48,107) 90.6%,rgb(17,48,107) 93.8%,rgb(17,48,107) 96.9%,rgb(16,47,106) 100.0%)"></div>
<div style="position:absolute;left:0;top:1088px;width:2048px;height:33px;background:linear-gradient(90deg,rgb(26,86,133) 0.0%,rgb(25,85,132) 3.1%,rgb(24,84,130) 6.2%,rgb(24,83,127) 9.4%,rgb(23,82,125) 12.5%,rgb(22,81,123) 15.6%,rgb(22,80,121) 18.8%,rgb(23,79,120) 21.9%,rgb(23,78,119) 25.0%,rgb(23,76,117) 28.1%,rgb(23,74,116) 31.2%,rgb(23,72,115) 34.4%,rgb(24,70,113) 37.5%,rgb(24,67,111) 40.6%,rgb(24,64,109) 43.8%,rgb(24,61,106) 46.9%,rgb(24,58,104) 50.0%,rgb(23,55,102) 53.1%,rgb(23,53,100) 56.2%,rgb(22,51,99) 59.4%,rgb(22,49,98) 62.5%,rgb(21,48,98) 65.6%,rgb(20,47,98) 68.8%,rgb(20,47,99) 71.9%,rgb(19,47,99) 75.0%,rgb(18,47,100) 78.1%,rgb(18,47,102) 81.2%,rgb(18,47,103) 84.4%,rgb(17,47,104) 87.5%,rgb(17,47,104) 90.6%,rgb(17,47,105) 93.8%,rgb(16,47,105) 96.9%,rgb(16,46,104) 100.0%)"></div>
<div style="position:absolute;left:0;top:1120px;width:2048px;height:33px;background:linear-gradient(90deg,rgb(26,87,134) 0.0%,rgb(25,86,132) 3.1%,rgb(24,85,130) 6.2%,rgb(23,84,128) 9.4%,rgb(22,83,125) 12.5%,rgb(22,82,123) 15.6%,rgb(22,81,122) 18.8%,rgb(22,80,120) 21.9%,rgb(22,79,119) 25.0%,rgb(22,77,118) 28.1%,rgb(22,75,116) 31.2%,rgb(23,73,115) 34.4%,rgb(23,70,113) 37.5%,rgb(23,67,111) 40.6%,rgb(23,64,108) 43.8%,rgb(23,61,106) 46.9%,rgb(23,58,103) 50.0%,rgb(23,55,101) 53.1%,rgb(22,52,99) 56.2%,rgb(22,50,97) 59.4%,rgb(21,48,96) 62.5%,rgb(21,47,96) 65.6%,rgb(20,46,96) 68.8%,rgb(19,45,96) 71.9%,rgb(19,45,97) 75.0%,rgb(18,45,98) 78.1%,rgb(18,45,99) 81.2%,rgb(17,45,100) 84.4%,rgb(17,45,101) 87.5%,rgb(17,46,102) 90.6%,rgb(16,46,102) 93.8%,rgb(16,45,102) 96.9%,rgb(15,45,101) 100.0%)"></div>
<div style="position:absolute;left:0;top:1152px;width:2048px;height:33px;background:linear-gradient(90deg,rgb(25,87,134) 0.0%,rgb(24,86,132) 3.1%,rgb(23,86,130) 6.2%,rgb(22,85,128) 9.4%,rgb(22,83,126) 12.5%,rgb(21,82,124) 15.6%,rgb(21,82,122) 18.8%,rgb(21,81,121) 21.9%,rgb(21,79,119) 25.0%,rgb(22,78,118) 28.1%,rgb(22,76,116) 31.2%,rgb(22,73,115) 34.4%,rgb(22,71,113) 37.5%,rgb(22,68,110) 40.6%,rgb(23,64,108) 43.8%,rgb(23,61,105) 46.9%,rgb(23,57,102) 50.0%,rgb(22,54,100) 53.1%,rgb(22,51,97) 56.2%,rgb(21,49,96) 59.4%,rgb(21,47,94) 62.5%,rgb(20,46,94) 65.6%,rgb(19,45,93) 68.8%,rgb(19,44,94) 71.9%,rgb(18,44,94) 75.0%,rgb(17,44,95) 78.1%,rgb(17,44,96) 81.2%,rgb(17,44,97) 84.4%,rgb(16,44,98) 87.5%,rgb(16,44,99) 90.6%,rgb(16,44,100) 93.8%,rgb(15,44,100) 96.9%,rgb(15,43,99) 100.0%)"></div>
<div style="position:absolute;left:0;top:1184px;width:2048px;height:33px;background:linear-gradient(90deg,rgb(25,88,134) 0.0%,rgb(24,87,133) 3.1%,rgb(23,86,131) 6.2%,rgb(22,85,128) 9.4%,rgb(21,84,126) 12.5%,rgb(21,83,124) 15.6%,rgb(21,82,123) 18.8%,rgb(21,81,121) 21.9%,rgb(21,80,120) 25.0%,rgb(21,78,118) 28.1%,rgb(21,76,117) 31.2%,rgb(21,74,115) 34.4%,rgb(22,71,113) 37.5%,rgb(22,68,110) 40.6%,rgb(22,64,107) 43.8%,rgb(22,61,104) 46.9%,rgb(22,57,101) 50.0%,rgb(22,54,98) 53.1%,rgb(22,50,96) 56.2%,rgb(21,48,94) 59.4%,rgb(20,46,92) 62.5%,rgb(20,44,91) 65.6%,rgb(19,43,91) 68.8%,rgb(18,42,91) 71.9%,rgb(17,42,91) 75.0%,rgb(17,42,92) 78.1%,rgb(16,42,93) 81.2%,rgb(16,42,94) 84.4%,rgb(16,42,95) 87.5%,rgb(15,42,96) 90.6%,rgb(15,43,97) 93.8%,rgb(15,43,97) 96.9%,rgb(14,42,96) 100.0%)"></div>
<div style="position:absolute;left:0;top:1216px;width:2048px;height:33px;background:linear-gradient(90deg,rgb(25,88,134) 0.0%,rgb(23,87,133) 3.1%,rgb(22,87,131) 6.2%,rgb(21,86,129) 9.4%,rgb(21,85,127) 12.5%,rgb(20,84,125) 15.6%,rgb(20,83,123) 18.8%,rgb(20,82,122) 21.9%,rgb(20,81,120) 25.0%,rgb(20,79,118) 28.1%,rgb(20,77,117) 31.2%,rgb(21,75,115) 34.4%,rgb(21,72,113) 37.5%,rgb(21,68,110) 40.6%,rgb(21,64,107) 43.8%,rgb(22,60,103) 46.9%,rgb(22,56,100) 50.0%,rgb(21,53,97) 53.1%,rgb(21,50,94) 56.2%,rgb(21,47,92) 59.4%,rgb(20,44,90) 62.5%,rgb(19,43,89) 65.6%,rgb(18,42,88) 68.8%,rgb(18,41,88) 71.9%,rgb(17,40,89) 75.0%,rgb(16,40,89) 78.1%,rgb(16,40,90) 81.2%,rgb(15,40,91) 84.4%,rgb(15,41,92) 87.5%,rgb(15,41,93) 90.6%,rgb(14,41,94) 93.8%,rgb(14,41,94) 96.9%,rgb(13,40,93) 100.0%)"></div>
<div style="position:absolute;left:0;top:1248px;width:2048px;height:33px;background:linear-gradient(90deg,rgb(24,88,134) 0.0%,rgb(23,88,132) 3.1%,rgb(22,87,131) 6.2%,rgb(21,87,129) 9.4%,rgb(20,86,128) 12.5%,rgb(20,85,126) 15.6%,rgb(20,84,124) 18.8%,rgb(20,83,122) 21.9%,rgb(20,81,120) 25.0%,rgb(20,80,119) 28.1%,rgb(20,78,117) 31.2%,rgb(20,75,115) 34.4%,rgb(20,72,112) 37.5%,rgb(21,68,109) 40.6%,rgb(21,64,106) 43.8%,rgb(21,60,102) 46.9%,rgb(21,56,99) 50.0%,rgb(21,52,95) 53.1%,rgb(21,49,92) 56.2%,rgb(20,46,90) 59.4%,rgb(19,43,88) 62.5%,rgb(19,41,86) 65.6%,rgb(18,40,86) 68.8%,rgb(17,39,85) 71.9%,rgb(16,39,86) 75.0%,rgb(16,38,86) 78.1%,rgb(15,38,87) 81.2%,rgb(15,39,88) 84.4%,rgb(14,39,89) 87.5%,rgb(14,39,90) 90.6%,rgb(14,39,90) 93.8%,rgb(13,39,90) 96.9%,rgb(13,38,90) 100.0%)"></div>
<div style="position:absolute;left:0;top:1280px;width:2048px;height:33px;background:linear-gradient(90deg,rgb(24,88,133) 0.0%,rgb(23,88,132) 3.1%,rgb(22,87,131) 6.2%,rgb(21,87,130) 9.4%,rgb(20,87,128) 12.5%,rgb(20,86,127) 15.6%,rgb(20,85,124) 18.8%,rgb(19,83,122) 21.9%,rgb(19,82,120) 25.0%,rgb(19,80,119) 28.1%,rgb(19,78,117) 31.2%,rgb(19,76,115) 34.4%,rgb(20,72,112) 37.5%,rgb(20,68,109) 40.6%,rgb(20,64,105) 43.8%,rgb(21,60,101) 46.9%,rgb(21,55,97) 50.0%,rgb(20,51,94) 53.1%,rgb(20,47,90) 56.2%,rgb(20,44,87) 59.4%,rgb(19,42,85) 62.5%,rgb(18,40,84) 65.6%,rgb(17,38,83) 68.8%,rgb(16,37,82) 71.9%,rgb(16,37,82) 75.0%,rgb(15,37,83) 78.1%,rgb(15,37,84) 81.2%,rgb(14,37,85) 84.4%,rgb(14,37,85) 87.5%,rgb(13,37,86) 90.6%,rgb(13,37,87) 93.8%,rgb(12,37,87) 96.9%,rgb(12,36,86) 100.0%)"></div>
<div style="position:absolute;left:0;top:1312px;width:2048px;height:33px;background:linear-gradient(90deg,rgb(24,89,133) 0.0%,rgb(23,88,132) 3.1%,rgb(22,88,131) 6.2%,rgb(21,87,130) 9.4%,rgb(20,87,129) 12.5%,rgb(20,86,127) 15.6%,rgb(19,85,125) 18.8%,rgb(19,84,122) 21.9%,rgb(19,82,120) 25.0%,rgb(19,81,119) 28.1%,rgb(19,79,117) 31.2%,rgb(19,76,115) 34.4%,rgb(19,73,112) 37.5%,rgb(19,69,109) 40.6%,rgb(20,64,105) 43.8%,rgb(20,59,100) 46.9%,rgb(20,55,96) 50.0%,rgb(20,50,92) 53.1%,rgb(20,46,88) 56.2%,rgb(19,43,85) 59.4%,rgb(18,40,83) 62.5%,rgb(17,38,81) 65.6%,rgb(17,37,80) 68.8%,rgb(16,36,79) 71.9%,rgb(15,35,79) 75.0%,rgb(14,35,80) 78.1%,rgb(14,35,80) 81.2%,rgb(13,35,81) 84.4%,rgb(13,35,82) 87.5%,rgb(12,35,83) 90.6%,rgb(12,35,83) 93.8%,rgb(11,35,83) 96.9%,rgb(11,34,82) 100.0%)"></div>
<div style="position:absolute;left:0;top:1344px;width:2048px;height:33px;background:linear-gradient(90deg,rgb(24,89,132) 0.0%,rgb(23,88,131) 3.1%,rgb(22,88,130) 6.2%,rgb(21,87,129) 9.4%,rgb(20,87,128) 12.5%,rgb(20,86,127) 15.6%,rgb(19,85,124) 18.8%,rgb(19,84,122) 21.9%,rgb(18,82,120) 25.0%,rgb(18,81,119) 28.1%,rgb(18,79,117) 31.2%,rgb(18,76,115) 34.4%,rgb(18,73,112) 37.5%,rgb(19,69,108) 40.6%,rgb(19,64,104) 43.8%,rgb(19,59,99) 46.9%,rgb(20,54,95) 50.0%,rgb(20,49,90) 53.1%,rgb(19,45,86) 56.2%,rgb(19,42,83) 59.4%,rgb(18,39,80) 62.5%,rgb(17,37,78) 65.6%,rgb(16,35,77) 68.8%,rgb(15,34,76) 71.9%,rgb(14,33,76) 75.0%,rgb(14,33,76) 78.1%,rgb(13,33,77) 81.2%,rgb(13,33,77) 84.4%,rgb(12,33,78) 87.5%,rgb(12,33,79) 90.6%,rgb(11,33,79) 93.8%,rgb(11,33,79) 96.9%,rgb(10,32,78) 100.0%)"></div>
<div style="position:absolute;left:0;top:1376px;width:2048px;height:33px;background:linear-gradient(90deg,rgb(23,89,132) 0.0%,rgb(22,88,131) 3.1%,rgb(21,88,130) 6.2%,rgb(21,87,129) 9.4%,rgb(20,87,128) 12.5%,rgb(19,86,126) 15.6%,rgb(19,85,124) 18.8%,rgb(18,83,122) 21.9%,rgb(18,82,120) 25.0%,rgb(18,81,118) 28.1%,rgb(17,79,117) 31.2%,rgb(17,77,115) 34.4%,rgb(18,73,112) 37.5%,rgb(18,69,108) 40.6%,rgb(19,64,103) 43.8%,rgb(19,58,98) 46.9%,rgb(19,53,93) 50.0%,rgb(19,48,88) 53.1%,rgb(19,44,84) 56.2%,rgb(18,40,80) 59.4%,rgb(17,37,77) 62.5%,rgb(16,35,75) 65.6%,rgb(15,33,74) 68.8%,rgb(14,32,73) 71.9%,rgb(14,32,73) 75.0%,rgb(13,31,73) 78.1%,rgb(12,31,73) 81.2%,rgb(12,31,74) 84.4%,rgb(11,31,74) 87.5%,rgb(11,31,75) 90.6%,rgb(10,31,75) 93.8%,rgb(10,30,75) 96.9%,rgb(9,30,74) 100.0%)"></div>
<div style="position:absolute;left:0;top:1408px;width:2048px;height:33px;background:linear-gradient(90deg,rgb(23,89,131) 0.0%,rgb(22,88,130) 3.1%,rgb(21,87,129) 6.2%,rgb(20,87,128) 9.4%,rgb(20,86,127) 12.5%,rgb(19,85,125) 15.6%,rgb(19,84,123) 18.8%,rgb(18,83,121) 21.9%,rgb(17,82,119) 25.0%,rgb(17,81,118) 28.1%,rgb(17,79,117) 31.2%,rgb(17,77,115) 34.4%,rgb(17,73,111) 37.5%,rgb(17,68,107) 40.6%,rgb(18,63,102) 43.8%,rgb(18,58,97) 46.9%,rgb(19,52,92) 50.0%,rgb(19,47,87) 53.1%,rgb(18,43,82) 56.2%,rgb(18,39,78) 59.4%,rgb(17,36,75) 62.5%,rgb(16,34,73) 65.6%,rgb(15,32,71) 68.8%,rgb(14,31,70) 71.9%,rgb(13,30,70) 75.0%,rgb(12,30,70) 78.1%,rgb(12,29,70) 81.2%,rgb(11,29,70) 84.4%,rgb(10,29,70) 87.5%,rgb(10,29,70) 90.6%,rgb(9,28,70) 93.8%,rgb(9,28,70) 96.9%,rgb(8,28,69) 100.0%)"></div>
<div style="position:absolute;left:0;top:1440px;width:2048px;height:33px;background:linear-gradient(90deg,rgb(23,88,130) 0.0%,rgb(22,88,129) 3.1%,rgb(21,87,128) 6.2%,rgb(20,87,127) 9.4%,rgb(20,86,126) 12.5%,rgb(19,85,124) 15.6%,rgb(18,83,122) 18.8%,rgb(18,82,120) 21.9%,rgb(17,82,119) 25.0%,rgb(17,81,118) 28.1%,rgb(16,79,116) 31.2%,rgb(16,77,114) 34.4%,rgb(16,73,111) 37.5%,rgb(17,68,106) 40.6%,rgb(17,63,101) 43.8%,rgb(18,57,96) 46.9%,rgb(18,52,90) 50.0%,rgb(18,46,85) 53.1%,rgb(18,42,80) 56.2%,rgb(17,38,76) 59.4%,rgb(16,34,72) 62.5%,rgb(15,32,70) 65.6%,rgb(14,30,68) 68.8%,rgb(13,29,67) 71.9%,rgb(12,28,67) 75.0%,rgb(12,28,66) 78.1%,rgb(11,28,66) 81.2%,rgb(10,27,66) 84.4%,rgb(10,27,66) 87.5%,rgb(9,27,66) 90.6%,rgb(8,26,66) 93.8%,rgb(8,26,65) 96.9%,rgb(7,25,64) 100.0%)"></div>
<div style="position:absolute;left:0;top:1472px;width:2048px;height:33px;background:linear-gradient(90deg,rgb(23,88,129) 0.0%,rgb(22,87,128) 3.1%,rgb(21,87,127) 6.2%,rgb(20,86,126) 9.4%,rgb(19,85,125) 12.5%,rgb(19,84,123) 15.6%,rgb(18,83,121) 18.8%,rgb(17,82,119) 21.9%,rgb(17,81,118) 25.0%,rgb(16,80,117) 28.1%,rgb(16,79,116) 31.2%,rgb(15,77,114) 34.4%,rgb(16,73,110) 37.5%,rgb(16,68,105) 40.6%,rgb(17,62,100) 43.8%,rgb(17,57,94) 46.9%,rgb(18,51,89) 50.0%,rgb(18,45,83) 53.1%,rgb(17,40,78) 56.2%,rgb(17,36,73) 59.4%,rgb(16,33,70) 62.5%,rgb(14,31,67) 65.6%,rgb(13,29,65) 68.8%,rgb(12,28,64) 71.9%,rgb(12,27,64) 75.0%,rgb(11,26,63) 78.1%,rgb(10,26,63) 81.2%,rgb(10,25,63) 84.4%,rgb(9,25,62) 87.5%,rgb(8,25,62) 90.6%,rgb(8,24,61) 93.8%,rgb(7,24,60) 96.9%,rgb(6,23,58) 100.0%)"></div>
<div style="position:absolute;left:0;top:1504px;width:2048px;height:33px;background:linear-gradient(90deg,rgb(23,88,128) 0.0%,rgb(22,87,127) 3.1%,rgb(21,86,126) 6.2%,rgb(20,85,125) 9.4%,rgb(19,84,123) 12.5%,rgb(18,83,122) 15.6%,rgb(18,82,120) 18.8%,rgb(17,81,118) 21.9%,rgb(16,81,117) 25.0%,rgb(16,80,116) 28.1%,rgb(15,79,115) 31.2%,rgb(15,76,113) 34.4%,rgb(15,72,109) 37.5%,rgb(16,67,104) 40.6%,rgb(16,62,99) 43.8%,rgb(17,56,93) 46.9%,rgb(17,50,87) 50.0%,rgb(17,45,81) 53.1%,rgb(17,40,76) 56.2%,rgb(16,35,71) 59.4%,rgb(15,32,68) 62.5%,rgb(14,30,65) 65.6%,rgb(13,28,63) 68.8%,rgb(12,26,61) 71.9%,rgb(11,25,61) 75.0%,rgb(10,25,60) 78.1%,rgb(10,24,59) 81.2%,rgb(9,24,59) 84.4%,rgb(8,23,58) 87.5%,rgb(7,23,58) 90.6%,rgb(7,22,56) 93.8%,rgb(6,22,55) 96.9%,rgb(5,21,54) 100.0%)"></div>
<div class="b" style="left:72.0px;top:72.0px;width:1104.0px;height:1114.0px;border-radius:54px;background:linear-gradient(135deg,#2e4590 0%,#712364 100%);box-shadow:0 14px 45px rgba(0,0,0,0.45);"></div>
<div class="b" style="left:80.0px;top:80.0px;width:1088.0px;height:1098.0px;border-radius:46px;background:#fff;overflow:hidden;"></div>
<div class="b" style="left:109.0px;top:101.0px;width:505.0px;height:59.0px;border-radius:10px;background:#f0f2f6;"></div>
<div class="b" style="left:638.0px;top:101.0px;width:506.0px;height:59.0px;border-radius:10px;background:#f0f2f6;"></div>
<span id="t_1" class="t" style="left:128.7px;top:118.7px;font-size:24.0px;line-height:24.0px;color:#31333f;font-weight:400;font-family:'Liberation Sans', sans-serif;transform:scaleX(0.8823);">English</span>
<span id="t_2" class="t" style="left:658.0px;top:118.7px;font-size:24.0px;line-height:24.0px;color:#31333f;font-weight:400;font-family:'Liberation Sans', sans-serif;transform:scaleX(0.8750);">Chinese</span>
<svg class="b" style="left:574.5px;top:124.4px;" width="18.0" height="12.2" viewBox="0 0 18.0 12.2"><path d="M3 3 L9.0 9.2 L15.0 3" fill="none" stroke="#31333f" stroke-width="3.0" stroke-linecap="round" stroke-linejoin="round"/></svg>
<svg class="b" style="left:1104.5px;top:124.4px;" width="18.0" height="12.2" viewBox="0 0 18.0 12.2"><path d="M3 3 L9.0 9.2 L15.0 3" fill="none" stroke="#31333f" stroke-width="3.0" stroke-linecap="round" stroke-linejoin="round"/></svg>
<svg class="b" style="left:110.0px;top:189.5px;" width="20.0" height="20.0" viewBox="0 0 20 20"><defs><linearGradient id="pg" x1="0" y1="0" x2="0" y2="1"><stop offset="0" stop-color="#eeeeee"/><stop offset="1" stop-color="#dedede"/></linearGradient></defs><path d="M1 0.5 L12 0.5 L18 6.5 L18 19.5 L1 19.5 Z" fill="url(#pg)"/><path d="M12 0.5 C13.5 2 15.5 4 18 6.5 L13.5 7 C13 5 12.8 3 12 0.5 Z" fill="#7d7d7d"/><path d="M3.5 11 H15 M3.5 13.5 H15 M3.5 16 H12" stroke="#d2d2d2" stroke-width="0.7"/></svg>
<span id="t_3" class="t" style="left:134.0px;top:190.2px;font-size:20.5px;line-height:20.5px;color:#31333f;font-weight:400;font-family:'Liberation Sans', sans-serif;transform:scaleX(0.9367);">Upload a Word document (.docx)</span>
<div class="b" style="left:109.0px;top:225.0px;width:1035.0px;height:100.0px;border-radius:12px;background:#f0f2f6;"></div>
<svg class="b" style="left:132.0px;top:257.0px;" width="54.0" height="36.0" viewBox="0 0 54 36"><path d="M14 33 C6 33 2.5 27.5 2.5 22.5 C2.5 16.5 7 12.5 12.5 12.5 C14 6 20 2.5 26.5 2.5 C34 2.5 39.5 8 40.5 14 C47 14 51.5 18.5 51.5 24 C51.5 29.5 47 33 41 33 Z" fill="none" stroke="#9aa6c2" stroke-width="4.5" stroke-linejoin="round"/><path d="M27 12 L19 21 L24 21 L24 29 L30 29 L30 21 L35 21 Z" fill="#9aa6c2"/></svg>
<span id="t_4" class="t" style="left:210.7px;top:246.1px;font-size:24.0px;line-height:24.0px;color:#31333f;font-weight:400;font-family:'Liberation Sans', sans-serif;transform:scaleX(0.9073);">Drag and drop file here</span>
<span id="t_5" class="t" style="left:210.7px;top:282.6px;font-size:20.5px;line-height:20.5px;color:#8b8d98;font-weight:400;font-family:'Liberation Sans', sans-serif;transform:scaleX(0.8946);">Limit 200MB per file &bull; DOCX</span>
<div class="b" style="left:965.6px;top:246.0px;width:154.4px;height:57.0px;border-radius:10px;background:#fff;border:1.5px solid #d6d7dc;box-sizing:border-box;"></div>
<span id="t_6" class="t" style="left:984.7px;top:262.5px;font-size:24.0px;line-height:24.0px;color:#31333f;font-weight:400;font-family:'Liberation Sans', sans-serif;transform:scaleX(0.9016);">Browse files</span>
<svg class="b" style="left:145.0px;top:354.0px;" width="29.0" height="36.0" viewBox="0 0 29 36"><path d="M2.5 3.5 Q2.5 2 4 2 L18 2 L27 11 L27 32.5 Q27 34 25.5 34 L4 34 Q2.5 34 2.5 32.5 Z M18 2 L18 11 L27 11" fill="none" stroke="#9aa6c2" stroke-width="3.6" stroke-linejoin="round"/></svg>
<span id="t_7" class="t" style="left:210.7px;top:356.7px;font-size:24.0px;line-height:24.0px;color:#31333f;font-weight:400;font-family:'Liberation Sans', sans-serif;transform:scaleX(0.9122);">test33.docx</span>
<span id="t_8" class="t" style="left:335.0px;top:359.6px;font-size:20.5px;line-height:20.5px;color:#8b8d98;font-weight:400;font-family:'Liberation Sans', sans-serif;transform:scaleX(0.8806);">10.1KB</span>
<div class="b" style="left:104.0px;top:426.5px;width:281.5px;height:67.5px;border-radius:15px;border:5px solid #ffa3a6;box-sizing:border-box;"></div>
<div class="b" style="left:109.0px;top:431.5px;width:271.5px;height:57.5px;border-radius:10px;background:#f0f2f6;border:2px solid #c4c7d0;box-sizing:border-box;"></div>
<svg class="b" style="left:128.3px;top:446.5px;" width="24.0" height="24.0" viewBox="0 0 24 24"><defs><linearGradient id="tg1" x1="0" y1="0" x2="0" y2="1"><stop offset="0" stop-color="#62b0fb"/><stop offset="0.6" stop-color="#3d8de0"/><stop offset="1" stop-color="#1c6cc4"/></linearGradient></defs><path d="M12 0.3 L16.6 5.2 L15 5.2 L15 8.6 L9.3 8.6 L9.3 5.2 L7.4 5.2 Z" fill="#f3483c"/><path d="M2.5 8.6 L21.5 8.6 L23 15.1 L23 20 L1 20 L1 15.1 Z" fill="url(#tg1)"/><path d="M1.6 15.1 L3.6 9.6 L3.8 15.1 Z M22.4 15.1 L20.4 9.6 L20.2 15.1 Z" fill="#0b4a8c" opacity="0.8"/><path d="M0.3 15.1 L6.7 15.1 C8.6 15.1 9.6 19.4 12 19.4 C14.4 19.4 15.4 19.4 17.3 15.1 L23.7 15.1 L23.7 22.6 Q23.7 23.5 22.8 23.5 L1.2 23.5 Q0.3 23.5 0.3 22.6 Z" fill="#efefec"/><path d="M0.3 22.2 H23.7" stroke="#dadad6" stroke-width="1.2"/></svg>
<span id="t_9" class="t" style="left:157.2px;top:448.2px;font-size:24.0px;line-height:24.0px;color:#31333f;font-weight:400;font-family:'Liberation Sans', sans-serif;transform:scaleX(0.9244);">Upload and translate</span>
<div class="b" style="left:109.0px;top:513.6px;width:1035.0px;height:81.4px;border-radius:12px;background:#ebf6ed;"></div>
<svg class="b" style="left:132.0px;top:542.0px;" width="24.0" height="24.0" viewBox="0 0 24 24"><defs><linearGradient id="cg" x1="0" y1="0" x2="0" y2="1"><stop offset="0" stop-color="#7fe08a"/><stop offset="0.25" stop-color="#0cc01e"/><stop offset="1" stop-color="#00a80f"/></linearGradient></defs><rect x="0.5" y="0.5" width="23" height="23" rx="5" fill="url(#cg)"/><path d="M5 10.5 L10 17 L19 4.5" fill="none" stroke="#fff" stroke-width="2.4" stroke-linecap="round" stroke-linejoin="round"/></svg>
<span id="t_10" class="t" style="left:161.3px;top:542.7px;font-size:24.0px;line-height:24.0px;color:#1b7f3b;font-weight:400;font-family:'Liberation Sans', sans-serif;transform:scaleX(0.9102);">File translated successfully!</span>
<svg class="b" style="left:109.0px;top:625.0px;" width="24.0" height="24.0" viewBox="0 0 24 24"><defs><linearGradient id="tg2" x1="0" y1="0" x2="0" y2="1"><stop offset="0" stop-color="#62b0fb"/><stop offset="0.6" stop-color="#3d8de0"/><stop offset="1" stop-color="#1c6cc4"/></linearGradient></defs><path d="M9.1 0.2 L14.1 0.2 L14.1 3 L16.1 3 L11.6 8.3 L7.1 3 L9.1 3 Z" fill="#f3483c"/><path d="M2.5 9.0 L21.5 9.0 L23 15.6 L23 20 L1 20 L1 15.6 Z" fill="url(#tg2)"/><path d="M1.6 15.6 L3.6 10.0 L3.8 15.6 Z M22.4 15.6 L20.4 10.0 L20.2 15.6 Z" fill="#0b4a8c" opacity="0.8"/><path d="M0.3 15.6 L6.7 15.6 C8.6 15.6 9.6 19.9 12 19.9 C14.4 19.9 15.4 19.9 17.3 15.6 L23.7 15.6 L23.7 22.6 Q23.7 23.5 22.8 23.5 L1.2 23.5 Q0.3 23.5 0.3 22.6 Z" fill="#efefec"/><path d="M0.3 22.2 H23.7" stroke="#dadad6" stroke-width="1.2"/></svg>
<span id="t_11" class="t" style="left:138.0px;top:625.7px;font-size:24.0px;line-height:24.0px;color:#0a54a6;font-weight:400;font-family:'Liberation Sans', sans-serif;transform:scaleX(0.9324);text-decoration:underline;text-decoration-thickness:2px;text-underline-offset:3px;">Download translated file</span>
<svg class="b" style="left:111.0px;top:686.0px;" width="16.0" height="10.0" viewBox="0 0 16 10"><path d="M1.5 1 L14.5 1 L8 8.5 Z" fill="#586e75"/></svg>
<span id="t_12" class="t" style="left:134.0px;top:689.3px;font-size:20.5px;line-height:20.5px;color:#073642;font-weight:700;font-family:'Liberation Mono', monospace;">{</span>
<div class="b" style="left:118.0px;top:715.0px;width:2.0px;height:416.0px;background:#e6e6e6;"></div>
<span id="t_13" class="t" style="left:147.4px;top:725.5px;font-size:20.7px;line-height:20.7px;color:#2e4852;font-weight:400;font-family:'Liberation Mono', monospace;letter-spacing:0.65px;">"status"</span>
<span id="t_14" class="t" style="left:261.2px;top:725.5px;font-size:20.7px;line-height:20.7px;color:#073642;font-weight:400;font-family:'Liberation Mono', monospace;">:</span>
<span id="t_15" class="t" style="left:279.9px;top:725.5px;font-size:20.7px;line-height:20.7px;color:#cb4b16;font-weight:400;font-family:'Liberation Mono', monospace;">"ok"</span>
<span id="t_16" class="t" style="left:147.4px;top:767.3px;font-size:20.7px;line-height:20.7px;color:#2e4852;font-weight:400;font-family:'Liberation Mono', monospace;letter-spacing:0.65px;">"original_filename"</span>
<span id="t_17" class="t" style="left:405.0px;top:767.3px;font-size:20.7px;line-height:20.7px;color:#073642;font-weight:400;font-family:'Liberation Mono', monospace;">:</span>
<span id="t_18" class="t" style="left:423.7px;top:767.3px;font-size:20.7px;line-height:20.7px;color:#cb4b16;font-weight:400;font-family:'Liberation Mono', monospace;">"test33.docx"</span>
<span id="t_19" class="t" style="left:147.4px;top:809.1px;font-size:20.7px;line-height:20.7px;color:#2e4852;font-weight:400;font-family:'Liberation Mono', monospace;letter-spacing:0.65px;">"saved_as"</span>
<span id="t_20" class="t" style="left:287.3px;top:809.1px;font-size:20.7px;line-height:20.7px;color:#073642;font-weight:400;font-family:'Liberation Mono', monospace;">:</span>
<span id="t_21" class="t" style="left:306.0px;top:809.1px;font-size:20.7px;line-height:20.7px;color:#cb4b16;font-weight:400;font-family:'Liberation Mono', monospace;">"test33_20251125_084317_619f0c51.docx"</span>
<span id="t_22" class="t" style="left:147.4px;top:850.9px;font-size:20.7px;line-height:20.7px;color:#2e4852;font-weight:400;font-family:'Liberation Mono', monospace;letter-spacing:0.65px;">"copy_created"</span>
<span id="t_23" class="t" style="left:339.6px;top:850.9px;font-size:20.7px;line-height:20.7px;color:#073642;font-weight:400;font-family:'Liberation Mono', monospace;">:</span>
<span id="t_24" class="t" style="left:358.3px;top:850.9px;font-size:20.7px;line-height:20.7px;color:#cb4b16;font-weight:400;font-family:'Liberation Mono', monospace;">"test33_619f0c51_copy.docx"</span>
<span id="t_25" class="t" style="left:147.4px;top:892.7px;font-size:20.7px;line-height:20.7px;color:#2e4852;font-weight:400;font-family:'Liberation Mono', monospace;letter-spacing:0.65px;">"translated_file"</span>
<span id="t_26" class="t" style="left:378.8px;top:892.7px;font-size:20.7px;line-height:20.7px;color:#073642;font-weight:400;font-family:'Liberation Mono', monospace;">:</span>
<span id="t_27" class="t" style="left:397.5px;top:892.7px;font-size:20.7px;line-height:20.7px;color:#cb4b16;font-weight:400;font-family:'Liberation Mono', monospace;">"test33_619f0c51_translated.docx"</span>
<span id="t_28" class="t" style="left:147.4px;top:934.5px;font-size:20.7px;line-height:20.7px;color:#2e4852;font-weight:400;font-family:'Liberation Mono', monospace;letter-spacing:0.65px;">"source_lang"</span>
<span id="t_29" class="t" style="left:326.5px;top:934.5px;font-size:20.7px;line-height:20.7px;color:#073642;font-weight:400;font-family:'Liberation Mono', monospace;">:</span>
<span id="t_30" class="t" style="left:345.2px;top:934.5px;font-size:20.7px;line-height:20.7px;color:#cb4b16;font-weight:400;font-family:'Liberation Mono', monospace;">"English"</span>
<span id="t_31" class="t" style="left:147.4px;top:976.3px;font-size:20.7px;line-height:20.7px;color:#2e4852;font-weight:400;font-family:'Liberation Mono', monospace;letter-spacing:0.65px;">"target_lang"</span>
<span id="t_32" class="t" style="left:326.5px;top:976.3px;font-size:20.7px;line-height:20.7px;color:#073642;font-weight:400;font-family:'Liberation Mono', monospace;">:</span>
<span id="t_33" class="t" style="left:345.2px;top:976.3px;font-size:20.7px;line-height:20.7px;color:#cb4b16;font-weight:400;font-family:'Liberation Mono', monospace;">"Chinese"</span>
<span id="t_34" class="t" style="left:147.4px;top:1018.1px;font-size:20.7px;line-height:20.7px;color:#2e4852;font-weight:400;font-family:'Liberation Mono', monospace;letter-spacing:0.65px;">"word_count"</span>
<span id="t_35" class="t" style="left:313.5px;top:1018.1px;font-size:20.7px;line-height:20.7px;color:#073642;font-weight:400;font-family:'Liberation Mono', monospace;">:</span>
<span id="t_36" class="t" style="left:332.8px;top:1018.1px;font-size:20.7px;line-height:20.7px;color:#268bd2;font-weight:400;font-family:'Liberation Mono', monospace;">82</span>
<span id="t_37" class="t" style="left:147.4px;top:1059.9px;font-size:20.7px;line-height:20.7px;color:#2e4852;font-weight:400;font-family:'Liberation Mono', monospace;letter-spacing:0.65px;">"report_created"</span>
<span id="t_38" class="t" style="left:365.8px;top:1059.9px;font-size:20.7px;line-height:20.7px;color:#073642;font-weight:400;font-family:'Liberation Mono', monospace;">:</span>
<span id="t_39" class="t" style="left:384.4px;top:1059.9px;font-size:20.7px;line-height:20.7px;color:#cb4b16;font-weight:400;font-family:'Liberation Mono', monospace;">"test33_619f0c51_report.txt"</span>
<span id="t_40" class="t" style="left:147.4px;top:1101.7px;font-size:20.7px;line-height:20.7px;color:#2e4852;font-weight:400;font-family:'Liberation Mono', monospace;letter-spacing:0.65px;">"error"</span>
<span id="t_41" class="t" style="left:248.1px;top:1101.7px;font-size:20.7px;line-height:20.7px;color:#073642;font-weight:400;font-family:'Liberation Mono', monospace;">:</span>
<div class="b" style="left:267.2px;top:1098.0px;width:44.7px;height:28.2px;border-radius:5px;background:#e8e8e8;"></div>
<span id="t_42" class="t" style="left:269.4px;top:1105.3px;font-size:16.4px;line-height:16.4px;color:#dc2f2f;font-weight:700;font-family:'Liberation Mono', monospace;">NULL</span>
<span id="t_43" class="t" style="left:113.0px;top:1139.3px;font-size:20.5px;line-height:20.5px;color:#073642;font-weight:700;font-family:'Liberation Mono', monospace;">}</span>
<div class="b" style="left:872.0px;top:350.0px;width:1104.0px;height:1114.0px;border-radius:54px;background:linear-gradient(135deg,#5179f2 0%,#9a5ad8 50%,#e43eae 100%);box-shadow:-7px 8px 44px rgba(0,0,0,0.62);"></div>
<div class="b" style="left:880.0px;top:358.0px;width:1088.0px;height:1098.0px;border-radius:46px;background:#fff;"></div>
<svg class="b" style="left:909.0px;top:448.0px;" width="63.0" height="63.0" viewBox="0 0 63 63"><defs><radialGradient id="gg" cx="0.36" cy="0.5" r="0.66"><stop offset="0" stop-color="#4d96e8"/><stop offset="0.5" stop-color="#2f68d4"/><stop offset="1" stop-color="#1a3c9c"/></radialGradient><linearGradient id="gl" gradientUnits="userSpaceOnUse" x1="0" y1="0" x2="0" y2="60"><stop offset="0" stop-color="#b8c458"/><stop offset="0.18" stop-color="#d4d87a"/><stop offset="0.34" stop-color="#f6f4bc"/><stop offset="0.5" stop-color="#b4dea0"/><stop offset="0.66" stop-color="#b8b468"/><stop offset="0.85" stop-color="#c49c4c"/></linearGradient><radialGradient id="gs" cx="0.36" cy="0.42" r="0.68"><stop offset="0.6" stop-color="#000" stop-opacity="0"/><stop offset="1" stop-color="#081040" stop-opacity="0.6"/></radialGradient><clipPath id="gc"><circle cx="31.5" cy="31.5" r="31"/></clipPath></defs><circle cx="31.5" cy="31.5" r="31" fill="url(#gg)"/><g clip-path="url(#gc)"><g fill="url(#gl)"><path d="M17.5 17 L18.5 13.5 L21 12.5 L22 10 L25 8.5 L27 7 L29 3.5 L33 2.6 L37 4 L38 2.6 L45 2 L52 3 L57 7 L60.5 12 L62 18 L62.5 32 L58 30 L56 25 L52.4 23 L50 21.5 L52.4 25.5 L51 29 L49.3 30.7 L47.5 33 L45.1 36.5 L43 42 L40.4 45.8 L36 50 L32 52.1 L29.5 48 L27.9 44.3 L27 38 L25 35.4 L20 34 L15.4 33.3 L12.5 29 L11.75 23.4 L13 20 L16 18.5 Z"/><path d="M-1 32.3 L4 34 L6 39 L5 45 L2 49.5 L-1 49.5 Z"/><ellipse cx="20.4" cy="9.4" rx="1.5" ry="2.3"/><ellipse cx="45.6" cy="45.3" rx="1.5" ry="3.2" transform="rotate(22 45.6 45.3)"/></g><g fill="#2c66d2"><path d="M20 17.8 C24 15.6 30 15.8 34 16.2 C37 16.4 40 16.8 42.2 18.6 C38 19.3 34 18.7 30 18.8 C26 18.9 23 19.1 20 18.7 Z"/><path d="M22.8 6.5 L27.5 5.5 L28.5 9.2 L24.5 10.2 Z M31 5.8 L35 5.2 L36 9.5 L32.2 10.2 Z"/><ellipse cx="39.3" cy="13.8" rx="3" ry="1.3"/><ellipse cx="46.6" cy="15.3" rx="1.3" ry="2.5"/></g><path d="M39.9 21.4 L46.7 30.7" stroke="#2c66d2" stroke-width="1.3"/></g><circle cx="31.5" cy="31.5" r="31" fill="url(#gs)"/></svg>
<span id="t_44" class="t" style="left:987.0px;top:450.2px;font-size:63.0px;line-height:63.0px;color:#31333f;font-weight:700;font-family:'Liberation Sans', sans-serif;transform:scaleX(0.9337);-webkit-text-stroke:0.8px #31333f;">Translate Word Documents</span>
<svg class="b" style="left:908.1px;top:549.5px;" width="20.0" height="20.0" viewBox="0 0 20 20"><defs><linearGradient id="kg" x1="0" y1="0" x2="1" y2="1"><stop offset="0" stop-color="#fbd834"/><stop offset="1" stop-color="#d19a12"/></linearGradient></defs><path d="M9.6 9.2 L1.2 17.2 Q0.6 18.6 2.2 19 L3.8 17.8 L5 18.4 L5.6 16.8 L6.9 17.1 L7.4 15.4 L8.6 15.3 L12.6 11.6 Z" fill="#d9a414"/><circle cx="13.8" cy="6.6" r="6.1" fill="url(#kg)"/><circle cx="15.3" cy="5.1" r="1.9" fill="#fff"/></svg>
<span id="t_45" class="t" style="left:933.2px;top:550.6px;font-size:20.5px;line-height:20.5px;color:#31333f;font-weight:400;font-family:'Liberation Sans', sans-serif;transform:scaleX(0.8811);">OpenAI API Key</span>
<div class="b" style="left:908.0px;top:586.0px;width:1032.7px;height:58.0px;border-radius:10px;background:#f0f2f6;"></div>
<svg class="b" style="left:908.0px;top:674.0px;" width="21.0" height="19.0" viewBox="0 0 21 19"><defs><radialGradient id="bg1" cx="0.55" cy="0.3" r="0.8"><stop offset="0" stop-color="#fac0d4"/><stop offset="0.6" stop-color="#ee90b0"/><stop offset="1" stop-color="#c85c80"/></radialGradient></defs><path d="M1 9 C0 5 3 1.5 8 1 C12 0.3 18 1.5 20 6 C21 9 20.5 12.5 18 13.5 C16.5 15.5 14 16.5 12.5 15.5 C13 17.5 10 18 8.5 16 C6 15.5 3.5 14.5 2.5 13 C1 12 0.8 10.5 1 9 Z" fill="url(#bg1)"/><path d="M2.5 12.5 C4 11 5 13 6.5 12 M4 7.5 C6 6 8 8 10 6.5 C12 5.5 13 7 15 6 M6 3.5 C8 4.5 10 2.5 12 3.5 M7 10.5 C9 9.5 11 11 13.5 10 C15 9.5 17 10.5 18.5 9.5 M15.5 3 C16 5 18 5 19 7" fill="none" stroke="#c8587c" stroke-width="0.9" stroke-linecap="round"/><path d="M9 15.8 C10.5 17.5 12.5 17 12.8 15.2 C11.5 15.8 10 15.8 9 15.8 Z" fill="#b04868"/></svg>
<span id="t_46" class="t" style="left:933.0px;top:673.6px;font-size:20.5px;line-height:20.5px;color:#31333f;font-weight:400;font-family:'Liberation Sans', sans-serif;transform:scaleX(0.9524);">Translation model:</span>
<svg class="b" style="left:1917.5px;top:673.6px;" width="22.0" height="22.0" viewBox="0 0 22 22"><circle cx="11" cy="11" r="9.6" fill="none" stroke="#6b6d78" stroke-width="1.8"/><path d="M8.2 8.6 C8.2 6.9 9.4 6 11 6 C12.7 6 13.8 7 13.8 8.4 C13.8 10.3 11.2 10.4 11.2 12.6" fill="none" stroke="#6b6d78" stroke-width="1.8" stroke-linecap="round"/><circle cx="11.1" cy="15.6" r="1.2" fill="#6b6d78"/></svg>
<div class="b" style="left:908.0px;top:709.0px;width:1032.7px;height:58.0px;border-radius:10px;background:#f0f2f6;"></div>
<span id="t_47" class="t" style="left:927.4px;top:726.7px;font-size:24.0px;line-height:24.0px;color:#31333f;font-weight:400;font-family:'Liberation Sans', sans-serif;transform:scaleX(0.8973);">gpt-4.1</span>
<svg class="b" style="left:1900.5px;top:731.9px;" width="18.0" height="12.2" viewBox="0 0 18.0 12.2"><path d="M3 3 L9.0 9.2 L15.0 3" fill="none" stroke="#31333f" stroke-width="3.0" stroke-linecap="round" stroke-linejoin="round"/></svg>
<div class="b" style="left:908.0px;top:791.0px;width:201.5px;height:58.0px;border-radius:10px;background:#fff;border:1.5px solid #d6d7dc;box-sizing:border-box;"></div>
<svg class="b" style="left:927.0px;top:808.0px;" width="24.0" height="24.0" viewBox="0 0 24 24"><circle cx="9" cy="9" r="7" fill="#f4f4f4" stroke="#707070" stroke-width="1.6"/><path d="M14.5 14.5 L20.5 20.5" stroke="#111" stroke-width="4" stroke-linecap="round"/></svg>
<span id="t_48" class="t" style="left:956.0px;top:807.7px;font-size:24.0px;line-height:24.0px;color:#31333f;font-weight:400;font-family:'Liberation Sans', sans-serif;transform:scaleX(0.8654);">Check API key</span>
<svg class="b" style="left:908.0px;top:879.0px;" width="20.0" height="20.0" viewBox="0 0 20 20"><rect x="2" y="4" width="16" height="14" fill="#c49a6a"/><rect x="1" y="2" width="18" height="3.5" rx="1" fill="#b88a55"/><rect x="2" y="4.2" width="16" height="1.6" fill="#6b4f30"/><rect x="1.5" y="16.5" width="17.5" height="2.5" rx="1" fill="#d2a870"/></svg>
<span id="t_49" class="t" style="left:933.0px;top:879.6px;font-size:20.5px;line-height:20.5px;color:#31333f;font-weight:400;font-family:'Liberation Sans', sans-serif;transform:scaleX(0.9492);">Context history length (number of previous translations)</span>
<div class="b" style="left:908.0px;top:914.0px;width:1032.7px;height:59.0px;border-radius:10px;background:#f0f2f6;"></div>
<span id="t_50" class="t" style="left:927.4px;top:931.2px;font-size:24.0px;line-height:24.0px;color:#31333f;font-weight:400;font-family:'Liberation Sans', sans-serif;">3</span>
<div class="b" style="left:1862.7px;top:942.2px;width:12.3px;height:3.0px;background:#31333f;"></div>
<div class="b" style="left:1910.0px;top:942.5px;width:12.3px;height:3.0px;background:#31333f;"></div>
<div class="b" style="left:1914.6px;top:938.0px;width:3.0px;height:12.0px;background:#31333f;"></div>
<svg class="b" style="left:908.0px;top:1003.0px;" width="20.0" height="20.0" viewBox="0 0 20 20"><g fill="none" stroke="#4aa8d8" stroke-width="1.5"><circle cx="10" cy="10" r="9"/><ellipse cx="10" cy="10" rx="4.2" ry="9"/><line x1="10" y1="1" x2="10" y2="19"/><line x1="1" y1="10" x2="19" y2="10"/><path d="M2.5 5.2 H17.5 M2.5 14.8 H17.5"/></g></svg>
<span id="t_51" class="t" style="left:933.0px;top:1003.1px;font-size:20.5px;line-height:20.5px;color:#31333f;font-weight:400;font-family:'Liberation Sans', sans-serif;transform:scaleX(0.9129);">Source language</span>
<svg class="b" style="left:1435.0px;top:1002.0px;" width="22.0" height="22.0" viewBox="0 0 22 22"><defs><linearGradient id="ag" x1="0" y1="0" x2="0" y2="1"><stop offset="0" stop-color="#c4d8e8"/><stop offset="0.25" stop-color="#7aa2c8"/><stop offset="1" stop-color="#5a7896"/></linearGradient></defs><rect x="0.5" y="0.5" width="21" height="21" rx="4.5" fill="url(#ag)"/><path d="M4 8 L10.5 8 L10.5 4.5 L17 11 L10.5 17.5 L10.5 14 L4 14 Z" fill="#fff"/></svg>
<span id="t_52" class="t" style="left:1461.0px;top:1003.1px;font-size:20.5px;line-height:20.5px;color:#31333f;font-weight:400;font-family:'Liberation Sans', sans-serif;transform:scaleX(0.9272);">Target language</span>
<div class="b" style="left:908.0px;top:1037.0px;width:504.6px;height:59.0px;border-radius:10px;background:#f0f2f6;"></div>
<div class="b" style="left:1434.4px;top:1037.0px;width:506.3px;height:59.0px;border-radius:10px;background:#f0f2f6;"></div>
<span id="t_53" class="t" style="left:927.4px;top:1054.7px;font-size:24.0px;line-height:24.0px;color:#31333f;font-weight:400;font-family:'Liberation Sans', sans-serif;transform:scaleX(0.8810);">English</span>
<span id="t_54" class="t" style="left:1454.0px;top:1054.7px;font-size:24.0px;line-height:24.0px;color:#31333f;font-weight:400;font-family:'Liberation Sans', sans-serif;transform:scaleX(0.8750);">Chinese</span>
<svg class="b" style="left:1373.3px;top:1060.4px;" width="18.0" height="12.2" viewBox="0 0 18.0 12.2"><path d="M3 3 L9.0 9.2 L15.0 3" fill="none" stroke="#31333f" stroke-width="3.0" stroke-linecap="round" stroke-linejoin="round"/></svg>
<svg class="b" style="left:1901.0px;top:1060.4px;" width="18.0" height="12.2" viewBox="0 0 18.0 12.2"><path d="M3 3 L9.0 9.2 L15.0 3" fill="none" stroke="#31333f" stroke-width="3.0" stroke-linecap="round" stroke-linejoin="round"/></svg>
<svg class="b" style="left:909.0px;top:1126.0px;" width="20.0" height="20.0" viewBox="0 0 20 20"><defs><linearGradient id="pg" x1="0" y1="0" x2="0" y2="1"><stop offset="0" stop-color="#eeeeee"/><stop offset="1" stop-color="#dedede"/></linearGradient></defs><path d="M1 0.5 L12 0.5 L18 6.5 L18 19.5 L1 19.5 Z" fill="url(#pg)"/><path d="M12 0.5 C13.5 2 15.5 4 18 6.5 L13.5 7 C13 5 12.8 3 12 0.5 Z" fill="#7d7d7d"/><path d="M3.5 11 H15 M3.5 13.5 H15 M3.5 16 H12" stroke="#d2d2d2" stroke-width="0.7"/></svg>
<span id="t_55" class="t" style="left:933.0px;top:1126.1px;font-size:20.5px;line-height:20.5px;color:#31333f;font-weight:400;font-family:'Liberation Sans', sans-serif;transform:scaleX(0.9367);">Upload a Word document (.docx)</span>
<div class="b" style="left:908.0px;top:1161.0px;width:1032.7px;height:99.7px;border-radius:12px;background:#f0f2f6;"></div>
<svg class="b" style="left:932.0px;top:1193.0px;" width="54.0" height="36.0" viewBox="0 0 54 36"><path d="M14 33 C6 33 2.5 27.5 2.5 22.5 C2.5 16.5 7 12.5 12.5 12.5 C14 6 20 2.5 26.5 2.5 C34 2.5 39.5 8 40.5 14 C47 14 51.5 18.5 51.5 24 C51.5 29.5 47 33 41 33 Z" fill="none" stroke="#9aa6c2" stroke-width="4.5" stroke-linejoin="round"/><path d="M27 12 L19 21 L24 21 L24 29 L30 29 L30 21 L35 21 Z" fill="#9aa6c2"/></svg>
<span id="t_56" class="t" style="left:1009.4px;top:1181.7px;font-size:24.0px;line-height:24.0px;color:#31333f;font-weight:400;font-family:'Liberation Sans', sans-serif;transform:scaleX(0.9065);">Drag and drop file here</span>
<span id="t_57" class="t" style="left:1009.4px;top:1218.1px;font-size:20.5px;line-height:20.5px;color:#8b8d98;font-weight:400;font-family:'Liberation Sans', sans-serif;transform:scaleX(0.8942);">Limit 200MB per file &bull; DOCX</span>
<div class="b" style="left:1762.0px;top:1182.0px;width:155.0px;height:57.4px;border-radius:10px;background:#fff;border:1.5px solid #d6d7dc;box-sizing:border-box;"></div>
<span id="t_58" class="t" style="left:1781.3px;top:1198.7px;font-size:24.0px;line-height:24.0px;color:#31333f;font-weight:400;font-family:'Liberation Sans', sans-serif;transform:scaleX(0.9016);">Browse files</span>
<div class="b" style="left:908.4px;top:1284.6px;width:270.6px;height:57.4px;border-radius:10px;background:#fff;border:1.5px solid #d6d7dc;box-sizing:border-box;"></div>
<svg class="b" style="left:927.1px;top:1300.4px;" width="24.0" height="24.0" viewBox="0 0 24 24"><defs><linearGradient id="tg3" x1="0" y1="0" x2="0" y2="1"><stop offset="0" stop-color="#62b0fb"/><stop offset="0.6" stop-color="#3d8de0"/><stop offset="1" stop-color="#1c6cc4"/></linearGradient></defs><path d="M12 0.3 L16.6 5.2 L15 5.2 L15 8.6 L9.3 8.6 L9.3 5.2 L7.4 5.2 Z" fill="#f3483c"/><path d="M2.5 8.6 L21.5 8.6 L23 15.1 L23 20 L1 20 L1 15.1 Z" fill="url(#tg3)"/><path d="M1.6 15.1 L3.6 9.6 L3.8 15.1 Z M22.4 15.1 L20.4 9.6 L20.2 15.1 Z" fill="#0b4a8c" opacity="0.8"/><path d="M0.3 15.1 L6.7 15.1 C8.6 15.1 9.6 19.4 12 19.4 C14.4 19.4 15.4 19.4 17.3 15.1 L23.7 15.1 L23.7 22.6 Q23.7 23.5 22.8 23.5 L1.2 23.5 Q0.3 23.5 0.3 22.6 Z" fill="#efefec"/><path d="M0.3 22.2 H23.7" stroke="#dadad6" stroke-width="1.2"/></svg>
<span id="t_59" class="t" style="left:956.0px;top:1300.7px;font-size:24.0px;line-height:24.0px;color:#31333f;font-weight:400;font-family:'Liberation Sans', sans-serif;transform:scaleX(0.9244);">Upload and translate</span>
<div class="b" style="left:908.0px;top:1412.5px;width:1032.7px;height:2.0px;background:#e4e4e6;"></div>
</body></html>
